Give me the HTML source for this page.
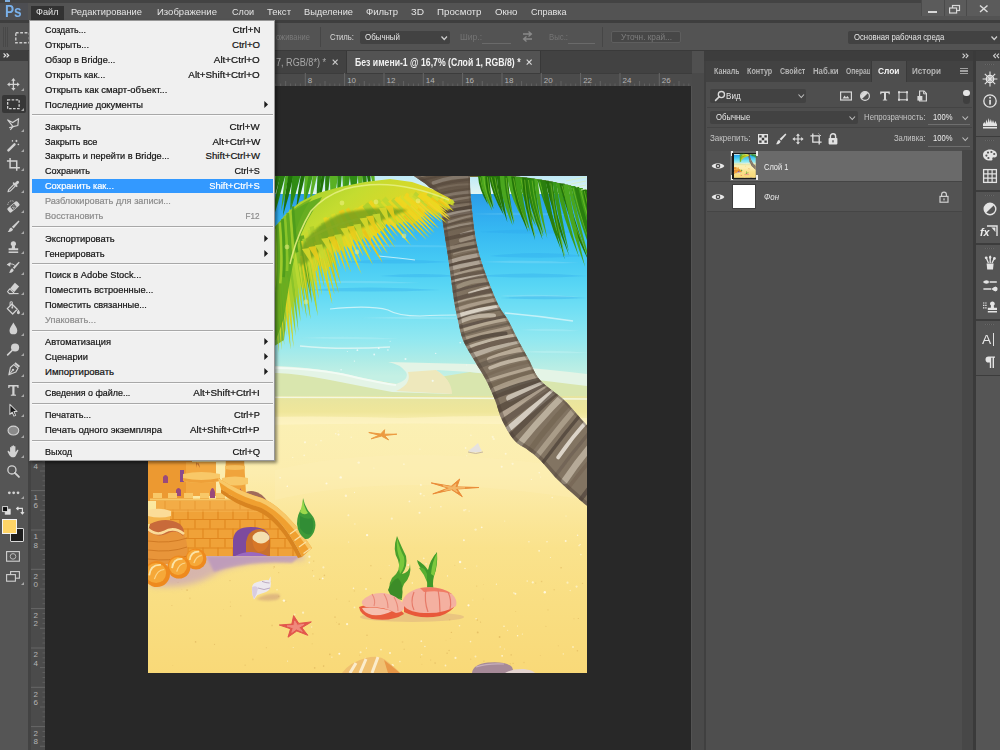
<!DOCTYPE html>
<html><head><meta charset="utf-8"><title>Photoshop</title>
<style>
html,body{margin:0;padding:0;}
body{width:1000px;height:750px;overflow:hidden;position:relative;background:#535353;font-family:"Liberation Sans",sans-serif;}
.t{position:absolute;white-space:nowrap;line-height:1;}
.r{position:absolute;}
svg{position:absolute;overflow:visible;}
</style></head><body>
<!-- sec_base -->
<div class="r" style="left:0px;top:0px;width:1000px;height:20px;background:#535353;"></div>
<div class="r" style="left:0px;top:0px;width:1000px;height:3px;background:#434343;"></div>
<div class="r" style="left:0px;top:20px;width:1000px;height:3px;background:#3e3e3e;"></div>
<div class="r" style="left:0px;top:23px;width:1000px;height:27px;background:#535353;"></div>
<div class="r" style="left:0px;top:50px;width:1000px;height:1px;background:#3a3a3a;"></div>
<div class="r" style="left:30px;top:51px;width:674px;height:22px;background:#424242;"></div>
<div class="r" style="left:30px;top:73px;width:662px;height:13px;background:#4b4b4b;"></div>
<div class="r" style="left:30px;top:86px;width:15px;height:664px;background:#4b4b4b;"></div>
<div class="r" style="left:45px;top:86px;width:646px;height:664px;background:#282828;"></div>
<div class="r" style="left:691px;top:73px;width:13px;height:677px;background:#535353;"></div>
<div class="r" style="left:28px;top:51px;width:2px;height:699px;background:#3a3a3a;"></div>
<!-- sec_canvas -->
<svg style="left:0;top:0" width="0" height="0"><defs><g id="beach"><linearGradient id="gsea" x1="0" y1="194" x2="0" y2="376" gradientUnits="userSpaceOnUse">
<stop offset="0" stop-color="#2c9ce6"/><stop offset="0.08" stop-color="#2fa8ee"/><stop offset="0.2" stop-color="#36b8f2"/><stop offset="0.35" stop-color="#44c8f4"/><stop offset="0.5" stop-color="#58d6f4"/><stop offset="0.65" stop-color="#74e0f4"/><stop offset="0.8" stop-color="#92e8f0"/><stop offset="0.92" stop-color="#b0ece6"/><stop offset="1" stop-color="#c4f0e4"/></linearGradient>
<linearGradient id="gsand" x1="0" y1="395" x2="0" y2="673" gradientUnits="userSpaceOnUse">
<stop offset="0" stop-color="#e6e4a0"/><stop offset="0.06" stop-color="#efe69a"/><stop offset="0.1" stop-color="#fbf0b4"/><stop offset="0.28" stop-color="#fcedae"/><stop offset="0.42" stop-color="#fbe79c"/><stop offset="0.55" stop-color="#fae28c"/><stop offset="0.75" stop-color="#f9de82"/><stop offset="1" stop-color="#f9d978"/></linearGradient>
<linearGradient id="gsky" x1="0" y1="176" x2="0" y2="194" gradientUnits="userSpaceOnUse"><stop offset="0" stop-color="#bfe9f6"/><stop offset="1" stop-color="#e2f6f4"/></linearGradient>
<rect x="148" y="176" width="439" height="497" fill="#fbe9a4"/>
<rect x="148" y="176" width="439" height="19" fill="url(#gsky)"/>
<rect x="148" y="194" width="439" height="190" fill="url(#gsea)"/>
<path d="M300 212 Q360.0 209 420 213 Q360.0 214 300 212 Z" fill="#5cc4f4" opacity="0.5"/>
<path d="M470 214 Q525.0 211 580 215 Q525.0 216 470 214 Z" fill="#58c0f2" opacity="0.5"/>
<path d="M330 246 Q405.0 243 480 247 Q405.0 248 330 246 Z" fill="#6ad2f6" opacity="0.45"/>
<path d="M480 262 Q530.0 259 580 263 Q530.0 264 480 262 Z" fill="#78d8f6" opacity="0.5"/>
<path d="M300 282 Q360.0 279 420 283 Q360.0 284 300 282 Z" fill="#8ae0f6" opacity="0.45"/>
<path d="M500 296 Q540.0 293 580 297 Q540.0 298 500 296 Z" fill="#90e2f6" opacity="0.5"/>
<path d="M360 318 Q430.0 315 500 319 Q430.0 320 360 318 Z" fill="#a4eaf6" opacity="0.5"/>
<path d="M520 330 Q550.0 327 580 331 Q550.0 332 520 330 Z" fill="#a8ecf6" opacity="0.5"/>
<path d="M300 338 Q350.0 335 400 339 Q350.0 340 300 338 Z" fill="#b0eef4" opacity="0.5"/>
<path d="M520 352 Q555.0 349 590 353 Q555.0 354 520 352 Z" fill="#c0f2f2" opacity="0.5"/>
<path d="M340 262 Q395.0 257 450 262 Q395.0 265.0 340 262 Z" fill="#2aa4ec" opacity="0.32"/>
<path d="M380 276 Q420.0 272 460 276 Q420.0 278.4 380 276 Z" fill="#2aa4ec" opacity="0.32"/>
<path d="M300 290 Q370.0 285 440 290 Q370.0 293.0 300 290 Z" fill="#2aa4ec" opacity="0.32"/>
<path d="M480 232 Q533.5 227 587 232 Q533.5 235.0 480 232 Z" fill="#2aa4ec" opacity="0.32"/>
<path d="M490 256 Q538.5 250 587 256 Q538.5 259.6 490 256 Z" fill="#2aa4ec" opacity="0.32"/>
<path d="M478 276 Q532.5 271 587 276 Q532.5 279.0 478 276 Z" fill="#2aa4ec" opacity="0.32"/>
<path d="M300 226 Q375.0 222 450 226 Q375.0 228.4 300 226 Z" fill="#2aa4ec" opacity="0.32"/>
<path d="M500 298 Q543.5 294 587 298 Q543.5 300.4 500 298 Z" fill="#2aa4ec" opacity="0.32"/>
<path d="M378 256 Q400 258 415 260" stroke="#d8f4fa" stroke-width="1.2" fill="none" opacity="0.8"/>
<path d="M330 309 Q370 305 388 310 Q398 316 420 316 Q440 315 456 315" stroke="#e4f8fa" stroke-width="1.2" fill="none" opacity="0.75"/>
<path d="M505 313 Q540 316 573 321" stroke="#e4f8fa" stroke-width="1.4" fill="none" opacity="0.7"/>
<path d="M300 346 Q340 350 390 347" stroke="#e8f8f6" stroke-width="1.4" fill="none" opacity="0.75"/>
<path d="M148 372 L277 370 Q330 372 396 384 L470 372 L587 384 L587 400 L148 400 Z" fill="#d9e6ae"/>
<path d="M148 366 L277 366 Q320 368 350 375 Q380 382 396 384 Q410 380 406 372 Q400 364 388 362 L470 364 Q520 366 587 374 L587 386 Q540 380 470 372 L436 370 Q452 380 450 394 L392 392 Q360 386 330 380 Q300 374 277 373 L148 373 Z" fill="#e4f4e6"/>
<path d="M436 370 Q452 380 452 394 L396 391 Q412 384 408 372 Z" fill="#eee8bc"/>
<path d="M148 368 L277 368 Q320 369 350 376 Q380 383 396 385" stroke="#f2fbf4" stroke-width="2" fill="none"/>
<rect x="148" y="396" width="439" height="277" fill="url(#gsand)"/>
<path d="M148 397 L360 397.5 L587 399" stroke="#f4f8e0" stroke-width="1.3" fill="none"/>
<path d="M148 420 Q300 414 400 418 Q500 414 587 418 L587 426 Q400 420 148 428 Z" fill="#fdf4c4" opacity="0.7"/>
<path d="M275 470 Q400 440 587 470 L587 500 Q400 470 275 500 Z" fill="#fdf2c0" opacity="0.22"/>
<circle cx="468.5" cy="605.3" r="1.1" fill="#fffbe8" opacity="0.88"/>
<circle cx="504.6" cy="649.1" r="0.5" fill="#fffbe8" opacity="0.69"/>
<circle cx="567.5" cy="582.7" r="1.1" fill="#fffbe8" opacity="0.55"/>
<circle cx="420.9" cy="484.9" r="0.9" fill="#fffbe8" opacity="0.73"/>
<circle cx="280.1" cy="477.7" r="0.7" fill="#fffbe8" opacity="0.87"/>
<circle cx="512.6" cy="463.8" r="1.1" fill="#fffbe8" opacity="0.56"/>
<circle cx="466.8" cy="455.8" r="0.5" fill="#fffbe8" opacity="0.85"/>
<circle cx="340.7" cy="477.4" r="1.2" fill="#fffbe8" opacity="0.85"/>
<circle cx="365.4" cy="658.6" r="0.9" fill="#fffbe8" opacity="0.77"/>
<circle cx="339.3" cy="653.7" r="1.0" fill="#fffbe8" opacity="0.89"/>
<circle cx="552.2" cy="497.6" r="0.8" fill="#fffbe8" opacity="0.57"/>
<circle cx="321.0" cy="440.8" r="0.7" fill="#fffbe8" opacity="0.74"/>
<circle cx="277.0" cy="589.7" r="0.7" fill="#fffbe8" opacity="0.62"/>
<circle cx="528.9" cy="541.8" r="0.7" fill="#fffbe8" opacity="0.69"/>
<circle cx="493.7" cy="438.9" r="1.2" fill="#fffbe8" opacity="0.51"/>
<circle cx="507.7" cy="630.3" r="0.5" fill="#fffbe8" opacity="0.82"/>
<circle cx="389.2" cy="565.6" r="0.5" fill="#fffbe8" opacity="0.52"/>
<circle cx="331.9" cy="657.1" r="0.6" fill="#fffbe8" opacity="0.80"/>
<circle cx="563.3" cy="653.9" r="0.7" fill="#fffbe8" opacity="0.64"/>
<circle cx="438.1" cy="613.5" r="0.6" fill="#fffbe8" opacity="0.80"/>
<circle cx="522.3" cy="633.9" r="0.5" fill="#fffbe8" opacity="0.88"/>
<circle cx="304.2" cy="507.8" r="0.9" fill="#fffbe8" opacity="0.87"/>
<circle cx="381.0" cy="649.6" r="0.9" fill="#fffbe8" opacity="0.62"/>
<circle cx="373.9" cy="468.1" r="0.6" fill="#fffbe8" opacity="0.56"/>
<circle cx="489.0" cy="667.2" r="0.6" fill="#fffbe8" opacity="0.52"/>
<circle cx="580.9" cy="554.6" r="0.8" fill="#fffbe8" opacity="0.59"/>
<circle cx="459.5" cy="625.8" r="0.8" fill="#fffbe8" opacity="0.67"/>
<circle cx="293.2" cy="647.6" r="0.5" fill="#fffbe8" opacity="0.70"/>
<circle cx="502.1" cy="655.8" r="0.9" fill="#fffbe8" opacity="0.82"/>
<circle cx="308.9" cy="530.6" r="0.6" fill="#fffbe8" opacity="0.84"/>
<circle cx="367.1" cy="535.1" r="1.2" fill="#fffbe8" opacity="0.84"/>
<circle cx="577.6" cy="535.2" r="0.8" fill="#fffbe8" opacity="0.79"/>
<circle cx="424.0" cy="495.7" r="0.8" fill="#fffbe8" opacity="0.56"/>
<circle cx="392.5" cy="665.2" r="1.2" fill="#fffbe8" opacity="0.75"/>
<circle cx="430.3" cy="507.3" r="0.6" fill="#fffbe8" opacity="0.61"/>
<circle cx="517.6" cy="635.8" r="0.8" fill="#fffbe8" opacity="0.81"/>
<circle cx="515.4" cy="593.8" r="1.0" fill="#fffbe8" opacity="0.80"/>
<circle cx="388.3" cy="596.2" r="0.7" fill="#fffbe8" opacity="0.69"/>
<circle cx="513.9" cy="592.9" r="0.7" fill="#fffbe8" opacity="0.88"/>
<circle cx="476.8" cy="566.1" r="0.5" fill="#fffbe8" opacity="0.72"/>
<circle cx="353.5" cy="588.2" r="0.8" fill="#fffbe8" opacity="0.83"/>
<circle cx="476.1" cy="618.8" r="0.7" fill="#fffbe8" opacity="0.76"/>
<circle cx="504.0" cy="626.2" r="0.7" fill="#fffbe8" opacity="0.84"/>
<circle cx="544.8" cy="592.3" r="1.2" fill="#fffbe8" opacity="0.88"/>
<circle cx="436.1" cy="553.6" r="0.6" fill="#fffbe8" opacity="0.83"/>
<circle cx="565.7" cy="541.0" r="1.0" fill="#fffbe8" opacity="0.79"/>
<circle cx="501.7" cy="466.8" r="1.0" fill="#fffbe8" opacity="0.73"/>
<circle cx="481.7" cy="527.3" r="0.9" fill="#fffbe8" opacity="0.81"/>
<circle cx="472.8" cy="600.1" r="0.5" fill="#fffbe8" opacity="0.56"/>
<circle cx="412.3" cy="583.0" r="0.7" fill="#fffbe8" opacity="0.77"/>
<circle cx="470.9" cy="435.2" r="0.8" fill="#fffbe8" opacity="0.59"/>
<circle cx="292.7" cy="457.4" r="0.7" fill="#fffbe8" opacity="0.57"/>
<circle cx="335.7" cy="433.7" r="0.8" fill="#fffbe8" opacity="0.65"/>
<circle cx="465.0" cy="568.4" r="0.7" fill="#fffbe8" opacity="0.86"/>
<circle cx="276.2" cy="523.5" r="0.7" fill="#fffbe8" opacity="0.66"/>
<circle cx="311.6" cy="627.0" r="0.8" fill="#fffbe8" opacity="0.51"/>
<circle cx="465.6" cy="448.0" r="0.9" fill="#fffbe8" opacity="0.64"/>
<circle cx="455.5" cy="657.9" r="1.1" fill="#fffbe8" opacity="0.67"/>
<circle cx="527.2" cy="581.1" r="0.8" fill="#fffbe8" opacity="0.56"/>
<circle cx="460.1" cy="562.0" r="1.2" fill="#fffbe8" opacity="0.89"/>
<circle cx="464.1" cy="510.3" r="1.1" fill="#fffbe8" opacity="0.50"/>
<circle cx="309.3" cy="562.5" r="0.9" fill="#fffbe8" opacity="0.56"/>
<circle cx="470.5" cy="641.6" r="0.8" fill="#fffbe8" opacity="0.67"/>
<circle cx="345.9" cy="495.8" r="1.2" fill="#fffbe8" opacity="0.65"/>
<circle cx="573.0" cy="647.0" r="0.9" fill="#fffbe8" opacity="0.60"/>
<circle cx="579.1" cy="545.6" r="0.8" fill="#fffbe8" opacity="0.63"/>
<circle cx="580.1" cy="544.5" r="0.7" fill="#fffbe8" opacity="0.69"/>
<circle cx="313.7" cy="576.1" r="0.8" fill="#fffbe8" opacity="0.62"/>
<circle cx="517.5" cy="625.9" r="0.5" fill="#fffbe8" opacity="0.71"/>
<circle cx="360.6" cy="652.3" r="1.0" fill="#fffbe8" opacity="0.60"/>
<circle cx="358.7" cy="462.6" r="1.2" fill="#fffbe8" opacity="0.62"/>
<circle cx="463.9" cy="540.3" r="1.0" fill="#fffbe8" opacity="0.74"/>
<circle cx="505.7" cy="453.7" r="1.0" fill="#fffbe8" opacity="0.62"/>
<circle cx="440.9" cy="506.7" r="0.7" fill="#fffbe8" opacity="0.71"/>
<circle cx="419.5" cy="512.7" r="1.0" fill="#fffbe8" opacity="0.74"/>
<circle cx="287.3" cy="486.3" r="0.8" fill="#fffbe8" opacity="0.87"/>
<circle cx="550.4" cy="557.6" r="0.5" fill="#fffbe8" opacity="0.81"/>
<circle cx="408.2" cy="564.9" r="1.0" fill="#fffbe8" opacity="0.75"/>
<circle cx="424.9" cy="646.5" r="0.8" fill="#fffbe8" opacity="0.66"/>
<circle cx="539.2" cy="472.7" r="0.7" fill="#fffbe8" opacity="0.83"/>
<circle cx="296.4" cy="628.2" r="1.0" fill="#fffbe8" opacity="0.67"/>
<circle cx="364.5" cy="614.7" r="1.1" fill="#fffbe8" opacity="0.56"/>
<circle cx="423.8" cy="558.4" r="0.8" fill="#fffbe8" opacity="0.63"/>
<circle cx="323.4" cy="567.4" r="1.1" fill="#fffbe8" opacity="0.53"/>
<circle cx="347.1" cy="624.2" r="1.1" fill="#fffbe8" opacity="0.77"/>
<circle cx="283.9" cy="600.6" r="1.2" fill="#fffbe8" opacity="0.90"/>
<circle cx="492.7" cy="436.9" r="1.1" fill="#fffbe8" opacity="0.59"/>
<circle cx="475.5" cy="656.4" r="1.0" fill="#fffbe8" opacity="0.55"/>
<circle cx="366.4" cy="648.1" r="0.6" fill="#fffbe8" opacity="0.74"/>
<circle cx="403.9" cy="464.2" r="0.9" fill="#fffbe8" opacity="0.52"/>
<circle cx="309.4" cy="517.1" r="0.6" fill="#fffbe8" opacity="0.52"/>
<circle cx="453.8" cy="605.4" r="1.1" fill="#fffbe8" opacity="0.55"/>
<circle cx="409.4" cy="501.4" r="0.9" fill="#fffbe8" opacity="0.70"/>
<circle cx="566.0" cy="515.9" r="0.5" fill="#fffbe8" opacity="0.78"/>
<circle cx="322.7" cy="578.4" r="0.9" fill="#fffbe8" opacity="0.86"/>
<circle cx="447.5" cy="575.9" r="0.7" fill="#fffbe8" opacity="0.72"/>
<circle cx="354.5" cy="607.4" r="0.9" fill="#fffbe8" opacity="0.55"/>
<circle cx="348.4" cy="515.2" r="1.0" fill="#fffbe8" opacity="0.57"/>
<circle cx="496.4" cy="584.2" r="0.6" fill="#fffbe8" opacity="0.77"/>
<circle cx="304.2" cy="455.3" r="0.9" fill="#fffbe8" opacity="0.60"/>
<circle cx="547.0" cy="541.8" r="0.7" fill="#fffbe8" opacity="0.82"/>
<circle cx="285.1" cy="601.2" r="0.5" fill="#fffbe8" opacity="0.56"/>
<circle cx="570.2" cy="590.5" r="0.7" fill="#fffbe8" opacity="0.55"/>
<circle cx="576.6" cy="586.6" r="1.1" fill="#fffbe8" opacity="0.56"/>
<circle cx="469.1" cy="511.1" r="0.7" fill="#fffbe8" opacity="0.63"/>
<circle cx="465.7" cy="509.7" r="0.8" fill="#fffbe8" opacity="0.55"/>
<circle cx="532.8" cy="582.4" r="1.1" fill="#fffbe8" opacity="0.67"/>
<circle cx="539.1" cy="550.8" r="0.9" fill="#fffbe8" opacity="0.73"/>
<circle cx="504.7" cy="521.1" r="0.6" fill="#fffbe8" opacity="0.51"/>
<circle cx="338.5" cy="434.6" r="1.1" fill="#fffbe8" opacity="0.69"/>
<circle cx="421.3" cy="641.2" r="0.9" fill="#fffbe8" opacity="0.67"/>
<circle cx="419.9" cy="449.2" r="0.6" fill="#fffbe8" opacity="0.56"/>
<circle cx="391.8" cy="518.7" r="1.1" fill="#fffbe8" opacity="0.56"/>
<circle cx="354.5" cy="492.4" r="0.6" fill="#fffbe8" opacity="0.61"/>
<circle cx="348.7" cy="542.1" r="0.5" fill="#fffbe8" opacity="0.87"/>
<circle cx="390.0" cy="652.9" r="1.0" fill="#fffbe8" opacity="0.77"/>
<circle cx="421.8" cy="654.7" r="0.6" fill="#fffbe8" opacity="0.77"/>
<circle cx="366.0" cy="588.9" r="1.0" fill="#fffbe8" opacity="0.57"/>
<circle cx="338.1" cy="431.1" r="0.7" fill="#fffbe8" opacity="0.53"/>
<circle cx="399.9" cy="661.6" r="0.8" fill="#fffbe8" opacity="0.62"/>
<circle cx="420.6" cy="493.8" r="1.0" fill="#fffbe8" opacity="0.79"/>
<circle cx="326.5" cy="483.4" r="1.0" fill="#fffbe8" opacity="0.88"/>
<circle cx="475.6" cy="529.6" r="1.2" fill="#fffbe8" opacity="0.50"/>
<circle cx="294.8" cy="614.4" r="0.8" fill="#fffbe8" opacity="0.52"/>
<circle cx="445.5" cy="665.5" r="0.9" fill="#fffbe8" opacity="0.64"/>
<circle cx="305.0" cy="442.3" r="1.1" fill="#fffbe8" opacity="0.70"/>
<circle cx="351.2" cy="437.3" r="0.8" fill="#fffbe8" opacity="0.52"/>
<circle cx="354.9" cy="524.0" r="0.7" fill="#fffbe8" opacity="0.52"/>
<circle cx="287.6" cy="661.1" r="0.6" fill="#fffbe8" opacity="0.70"/>
<circle cx="400.3" cy="554.1" r="0.6" fill="#fffbe8" opacity="0.63"/>
<circle cx="309.4" cy="556.7" r="1.1" fill="#fffbe8" opacity="0.74"/>
<circle cx="540.7" cy="477.1" r="0.5" fill="#fffbe8" opacity="0.72"/>
<circle cx="426.3" cy="563.9" r="0.8" fill="#fffbe8" opacity="0.75"/>
<circle cx="500.2" cy="646.9" r="0.7" fill="#fffbe8" opacity="0.68"/>
<circle cx="531.4" cy="479.4" r="0.6" fill="#fffbe8" opacity="0.62"/>
<circle cx="303.1" cy="612.7" r="1.1" fill="#fffbe8" opacity="0.63"/>
<circle cx="316.1" cy="444.9" r="0.7" fill="#fffbe8" opacity="0.53"/>
<circle cx="336.5" cy="622.3" r="0.5" fill="#e0b860" opacity="0.42"/>
<circle cx="454.8" cy="565.2" r="0.5" fill="#e0b860" opacity="0.51"/>
<circle cx="312.6" cy="570.6" r="0.6" fill="#e0b860" opacity="0.53"/>
<circle cx="477.3" cy="620.1" r="0.8" fill="#e0b860" opacity="0.66"/>
<circle cx="480.5" cy="622.1" r="0.6" fill="#e0b860" opacity="0.73"/>
<circle cx="435.1" cy="663.1" r="0.8" fill="#e0b860" opacity="0.68"/>
<circle cx="266.4" cy="647.7" r="0.6" fill="#e0b860" opacity="0.45"/>
<circle cx="178.7" cy="578.3" r="0.5" fill="#e0b860" opacity="0.67"/>
<circle cx="274.2" cy="566.9" r="0.8" fill="#e0b860" opacity="0.62"/>
<circle cx="162.0" cy="565.5" r="0.5" fill="#e0b860" opacity="0.54"/>
<circle cx="524.0" cy="662.5" r="0.7" fill="#e0b860" opacity="0.49"/>
<circle cx="336.6" cy="599.1" r="0.6" fill="#e0b860" opacity="0.40"/>
<circle cx="404.2" cy="649.3" r="0.8" fill="#e0b860" opacity="0.44"/>
<circle cx="380.7" cy="578.5" r="0.8" fill="#e0b860" opacity="0.58"/>
<circle cx="558.3" cy="645.8" r="0.5" fill="#e0b860" opacity="0.53"/>
<circle cx="548.0" cy="609.8" r="0.6" fill="#e0b860" opacity="0.58"/>
<circle cx="483.9" cy="661.1" r="0.7" fill="#e0b860" opacity="0.79"/>
<circle cx="409.3" cy="571.2" r="0.8" fill="#e0b860" opacity="0.57"/>
<circle cx="172.8" cy="665.6" r="0.4" fill="#e0b860" opacity="0.63"/>
<circle cx="359.7" cy="655.2" r="0.6" fill="#e0b860" opacity="0.49"/>
<circle cx="270.5" cy="581.7" r="0.7" fill="#e0b860" opacity="0.54"/>
<circle cx="476.7" cy="586.1" r="0.6" fill="#e0b860" opacity="0.50"/>
<circle cx="577.4" cy="650.7" r="0.8" fill="#e0b860" opacity="0.65"/>
<circle cx="324.4" cy="575.4" r="0.8" fill="#e0b860" opacity="0.60"/>
<circle cx="166.4" cy="578.3" r="0.4" fill="#e0b860" opacity="0.69"/>
<circle cx="541.6" cy="581.5" r="0.8" fill="#e0b860" opacity="0.53"/>
<circle cx="447.1" cy="653.2" r="0.7" fill="#e0b860" opacity="0.72"/>
<circle cx="313.7" cy="561.1" r="0.7" fill="#e0b860" opacity="0.63"/>
<circle cx="230.4" cy="602.0" r="0.6" fill="#e0b860" opacity="0.41"/>
<circle cx="285.8" cy="601.3" r="0.6" fill="#e0b860" opacity="0.68"/>
<circle cx="323.6" cy="666.1" r="0.8" fill="#e0b860" opacity="0.77"/>
<circle cx="451.4" cy="632.4" r="0.7" fill="#e0b860" opacity="0.72"/>
<circle cx="307.8" cy="624.1" r="0.7" fill="#e0b860" opacity="0.61"/>
<circle cx="273.6" cy="568.4" r="0.4" fill="#e0b860" opacity="0.54"/>
<circle cx="402.5" cy="642.0" r="0.8" fill="#e0b860" opacity="0.52"/>
<circle cx="554.2" cy="589.7" r="0.8" fill="#e0b860" opacity="0.43"/>
<circle cx="477.7" cy="632.4" r="0.9" fill="#e0b860" opacity="0.76"/>
<circle cx="449.1" cy="650.5" r="0.8" fill="#e0b860" opacity="0.64"/>
<circle cx="240.8" cy="615.8" r="0.8" fill="#e0b860" opacity="0.50"/>
<circle cx="574.0" cy="618.7" r="0.6" fill="#e0b860" opacity="0.40"/>
<circle cx="319.7" cy="579.2" r="0.7" fill="#e0b860" opacity="0.76"/>
<circle cx="545.9" cy="626.3" r="0.6" fill="#e0b860" opacity="0.44"/>
<circle cx="449.6" cy="619.8" r="0.8" fill="#e0b860" opacity="0.55"/>
<circle cx="535.7" cy="583.0" r="0.6" fill="#e0b860" opacity="0.51"/>
<circle cx="420.6" cy="656.9" r="0.5" fill="#e0b860" opacity="0.65"/>
<circle cx="483.4" cy="584.3" r="0.4" fill="#e0b860" opacity="0.63"/>
<circle cx="511.2" cy="654.9" r="0.8" fill="#e0b860" opacity="0.57"/>
<circle cx="335.0" cy="617.1" r="0.9" fill="#e0b860" opacity="0.52"/>
<circle cx="272.1" cy="625.4" r="0.9" fill="#e0b860" opacity="0.47"/>
<circle cx="163.3" cy="572.5" r="0.7" fill="#e0b860" opacity="0.64"/>
<circle cx="230.0" cy="580.6" r="0.7" fill="#e0b860" opacity="0.66"/>
<circle cx="450.2" cy="638.7" r="0.4" fill="#e0b860" opacity="0.59"/>
<circle cx="513.1" cy="663.4" r="0.6" fill="#e0b860" opacity="0.74"/>
<circle cx="430.7" cy="660.1" r="0.5" fill="#e0b860" opacity="0.68"/>
<circle cx="515.7" cy="611.5" r="0.5" fill="#e0b860" opacity="0.48"/>
<circle cx="218.1" cy="570.0" r="0.5" fill="#e0b860" opacity="0.65"/>
<circle cx="195.6" cy="641.9" r="0.8" fill="#e0b860" opacity="0.73"/>
<circle cx="499.6" cy="637.0" r="0.9" fill="#e0b860" opacity="0.78"/>
<circle cx="421.9" cy="664.2" r="0.5" fill="#e0b860" opacity="0.44"/>
<circle cx="178.0" cy="582.3" r="0.6" fill="#e0b860" opacity="0.58"/>
<circle cx="446.0" cy="640.2" r="0.4" fill="#e0b860" opacity="0.56"/>
<circle cx="386.4" cy="600.5" r="0.5" fill="#e0b860" opacity="0.64"/>
<circle cx="312.9" cy="633.8" r="0.6" fill="#e0b860" opacity="0.79"/>
<circle cx="561.1" cy="567.8" r="0.8" fill="#e0b860" opacity="0.69"/>
<circle cx="278.7" cy="572.6" r="0.6" fill="#e0b860" opacity="0.54"/>
<circle cx="470.7" cy="659.2" r="0.6" fill="#e0b860" opacity="0.52"/>
<circle cx="367.0" cy="635.3" r="0.8" fill="#e0b860" opacity="0.63"/>
<circle cx="278.7" cy="596.4" r="0.8" fill="#e0b860" opacity="0.61"/>
<circle cx="171.9" cy="605.4" r="0.5" fill="#e0b860" opacity="0.67"/>
<circle cx="181.9" cy="589.3" r="0.4" fill="#e0b860" opacity="0.59"/>
<circle cx="578.3" cy="618.5" r="0.6" fill="#e0b860" opacity="0.77"/>
<circle cx="189.9" cy="598.4" r="0.8" fill="#e0b860" opacity="0.40"/>
<circle cx="483.2" cy="599.0" r="0.4" fill="#e0b860" opacity="0.50"/>
<circle cx="349.3" cy="601.3" r="0.7" fill="#e0b860" opacity="0.42"/>
<circle cx="245.1" cy="665.2" r="0.6" fill="#e0b860" opacity="0.59"/>
<circle cx="187.1" cy="590.1" r="0.9" fill="#e0b860" opacity="0.67"/>
<circle cx="370.9" cy="565.7" r="0.6" fill="#e0b860" opacity="0.71"/>
<circle cx="339.1" cy="624.1" r="0.9" fill="#e0b860" opacity="0.66"/>
<circle cx="426.6" cy="563.9" r="0.4" fill="#e0b860" opacity="0.71"/>
<circle cx="329.8" cy="654.4" r="0.8" fill="#e0b860" opacity="0.77"/>
<circle cx="314.7" cy="667.9" r="0.8" fill="#e0b860" opacity="0.76"/>
<circle cx="214.5" cy="644.3" r="0.6" fill="#e0b860" opacity="0.79"/>
<circle cx="582.5" cy="583.4" r="0.6" fill="#e0b860" opacity="0.51"/>
<circle cx="354.4" cy="590.9" r="0.7" fill="#e0b860" opacity="0.45"/>
<circle cx="223.6" cy="609.4" r="0.4" fill="#e0b860" opacity="0.55"/>
<circle cx="540.4" cy="655.6" r="0.5" fill="#e0b860" opacity="0.41"/>
<circle cx="510.3" cy="663.8" r="0.7" fill="#e0b860" opacity="0.45"/>
<circle cx="252.9" cy="659.4" r="0.9" fill="#e0b860" opacity="0.41"/>
<circle cx="230.4" cy="606.3" r="0.5" fill="#e0b860" opacity="0.70"/>
<circle cx="312.2" cy="643.7" r="0.5" fill="#e0b860" opacity="0.61"/>
<circle cx="466.7" cy="365.0" r="0.6" fill="#f4fcfc" opacity="0.8"/>
<circle cx="354.4" cy="361.1" r="0.7" fill="#f4fcfc" opacity="0.8"/>
<circle cx="387.9" cy="350.0" r="0.8" fill="#f4fcfc" opacity="0.8"/>
<circle cx="465.6" cy="334.1" r="0.8" fill="#f4fcfc" opacity="0.8"/>
<circle cx="374.2" cy="354.5" r="0.9" fill="#f4fcfc" opacity="0.8"/>
<circle cx="357.4" cy="350.2" r="0.9" fill="#f4fcfc" opacity="0.8"/>
<circle cx="341.1" cy="369.7" r="0.8" fill="#f4fcfc" opacity="0.8"/>
<circle cx="405.5" cy="358.9" r="1.0" fill="#f4fcfc" opacity="0.8"/>
<circle cx="347.3" cy="351.5" r="0.5" fill="#f4fcfc" opacity="0.8"/>
<circle cx="390.1" cy="341.2" r="0.5" fill="#f4fcfc" opacity="0.8"/>
<circle cx="378.7" cy="348.2" r="0.9" fill="#f4fcfc" opacity="0.8"/>
<circle cx="460.2" cy="342.8" r="0.8" fill="#f4fcfc" opacity="0.8"/>
<circle cx="432.7" cy="380.8" r="1.1" fill="#f4fcfc" opacity="0.8"/>
<circle cx="468.4" cy="338.2" r="0.6" fill="#f4fcfc" opacity="0.8"/>
<circle cx="461.1" cy="323.2" r="0.8" fill="#f4fcfc" opacity="0.8"/>
<circle cx="435.7" cy="353.4" r="0.7" fill="#f4fcfc" opacity="0.8"/><filter id="blur3" x="-20%" y="-50%" width="140%" height="200%"><feGaussianBlur stdDeviation="3"/></filter>
<filter id="blur1" x="-20%" y="-50%" width="140%" height="200%"><feGaussianBlur stdDeviation="1.2"/></filter>
<path d="M150 586 Q190 590 215 574 Q240 560 306 560 L300 552 L200 552 L150 570 Z" fill="#c09ac4" opacity="0.6" filter="url(#blur3)"/>
<path d="M206 556 H300 L292 563 Q250 560 214 572 Z" fill="#b08cc4" opacity="0.6" filter="url(#blur1)"/>
<rect x="148" y="455" width="44" height="46" fill="#f0a238"/>
<rect x="148" y="455" width="44" height="46" fill="#e8902a" opacity="0.5"/>
<path d="M163 483 V477 Q165.5 473 168 477 V483 Z" fill="#9a4a7a"/>
<path d="M176 496 V490 Q178.5 486 181 490 V496 Z" fill="#9a4a7a"/>
<rect x="180" y="470" width="4" height="12" fill="#8a4a8c"/>
<path d="M186 462 H216 V496 H186 Z" fill="#f2a840"/>
<path d="M183 474 Q201 470 220 474 V481 Q201 485 183 481 Z" fill="#f8c868"/>
<path d="M183 478 Q201 482 220 478 V481 Q201 485 183 481 Z" fill="#eea038"/>
<path d="M210 486 V492 Q212.5 484 215 492 V498 H210 Z" fill="#9a4a7a"/>
<path d="M196 462 V468 Q198 458 200 468 Z" fill="#c07030"/>
<path d="M226 458 H244 L246 494 H224 Z" fill="#f0a43c"/>
<path d="M222 478 Q235 475 248 478 V484 Q235 487 222 484 Z" fill="#f8c868"/>
<path d="M225 466 Q235 464 245 466 V469 Q235 471 225 469 Z" fill="#f6be5c"/>
<path d="M240 488 V494 Q241.5 486 243 494 Z" fill="#a0527a"/>
<path d="M246 492 Q258 488 268 502 L250 500 Z" fill="#a06a5a"/>
<path d="M156 499 H262 L300 556 H156 Z" fill="#f0a238"/>
<clipPath id="cwall"><path d="M156 499 H262 L300 556 H156 Z"/></clipPath>
<g clip-path="url(#cwall)"><path d="M150 500.5 H305" stroke="#e0861e" stroke-width="1.1"/><path d="M150 500 V509.5" stroke="#e0861e" stroke-width="1.1"/><path d="M165 500 V509.5" stroke="#e0861e" stroke-width="1.1"/><path d="M180 500 V509.5" stroke="#e0861e" stroke-width="1.1"/><path d="M195 500 V509.5" stroke="#e0861e" stroke-width="1.1"/><path d="M210 500 V509.5" stroke="#e0861e" stroke-width="1.1"/><path d="M225 500 V509.5" stroke="#e0861e" stroke-width="1.1"/><path d="M240 500 V509.5" stroke="#e0861e" stroke-width="1.1"/><path d="M255 500 V509.5" stroke="#e0861e" stroke-width="1.1"/><path d="M270 500 V509.5" stroke="#e0861e" stroke-width="1.1"/><path d="M285 500 V509.5" stroke="#e0861e" stroke-width="1.1"/><path d="M300 500 V509.5" stroke="#e0861e" stroke-width="1.1"/><path d="M150 510.0 H305" stroke="#e0861e" stroke-width="1.1"/><path d="M158 509.5 V519" stroke="#e0861e" stroke-width="1.1"/><path d="M173 509.5 V519" stroke="#e0861e" stroke-width="1.1"/><path d="M188 509.5 V519" stroke="#e0861e" stroke-width="1.1"/><path d="M203 509.5 V519" stroke="#e0861e" stroke-width="1.1"/><path d="M218 509.5 V519" stroke="#e0861e" stroke-width="1.1"/><path d="M233 509.5 V519" stroke="#e0861e" stroke-width="1.1"/><path d="M248 509.5 V519" stroke="#e0861e" stroke-width="1.1"/><path d="M263 509.5 V519" stroke="#e0861e" stroke-width="1.1"/><path d="M278 509.5 V519" stroke="#e0861e" stroke-width="1.1"/><path d="M293 509.5 V519" stroke="#e0861e" stroke-width="1.1"/><path d="M150 519.5 H305" stroke="#e0861e" stroke-width="1.1"/><path d="M150 519 V528.5" stroke="#e0861e" stroke-width="1.1"/><path d="M165 519 V528.5" stroke="#e0861e" stroke-width="1.1"/><path d="M180 519 V528.5" stroke="#e0861e" stroke-width="1.1"/><path d="M195 519 V528.5" stroke="#e0861e" stroke-width="1.1"/><path d="M210 519 V528.5" stroke="#e0861e" stroke-width="1.1"/><path d="M225 519 V528.5" stroke="#e0861e" stroke-width="1.1"/><path d="M240 519 V528.5" stroke="#e0861e" stroke-width="1.1"/><path d="M255 519 V528.5" stroke="#e0861e" stroke-width="1.1"/><path d="M270 519 V528.5" stroke="#e0861e" stroke-width="1.1"/><path d="M285 519 V528.5" stroke="#e0861e" stroke-width="1.1"/><path d="M300 519 V528.5" stroke="#e0861e" stroke-width="1.1"/><path d="M150 529.0 H305" stroke="#e0861e" stroke-width="1.1"/><path d="M158 528.5 V538" stroke="#e0861e" stroke-width="1.1"/><path d="M173 528.5 V538" stroke="#e0861e" stroke-width="1.1"/><path d="M188 528.5 V538" stroke="#e0861e" stroke-width="1.1"/><path d="M203 528.5 V538" stroke="#e0861e" stroke-width="1.1"/><path d="M218 528.5 V538" stroke="#e0861e" stroke-width="1.1"/><path d="M233 528.5 V538" stroke="#e0861e" stroke-width="1.1"/><path d="M248 528.5 V538" stroke="#e0861e" stroke-width="1.1"/><path d="M263 528.5 V538" stroke="#e0861e" stroke-width="1.1"/><path d="M278 528.5 V538" stroke="#e0861e" stroke-width="1.1"/><path d="M293 528.5 V538" stroke="#e0861e" stroke-width="1.1"/><path d="M150 538.5 H305" stroke="#e0861e" stroke-width="1.1"/><path d="M150 538 V547.5" stroke="#e0861e" stroke-width="1.1"/><path d="M165 538 V547.5" stroke="#e0861e" stroke-width="1.1"/><path d="M180 538 V547.5" stroke="#e0861e" stroke-width="1.1"/><path d="M195 538 V547.5" stroke="#e0861e" stroke-width="1.1"/><path d="M210 538 V547.5" stroke="#e0861e" stroke-width="1.1"/><path d="M225 538 V547.5" stroke="#e0861e" stroke-width="1.1"/><path d="M240 538 V547.5" stroke="#e0861e" stroke-width="1.1"/><path d="M255 538 V547.5" stroke="#e0861e" stroke-width="1.1"/><path d="M270 538 V547.5" stroke="#e0861e" stroke-width="1.1"/><path d="M285 538 V547.5" stroke="#e0861e" stroke-width="1.1"/><path d="M300 538 V547.5" stroke="#e0861e" stroke-width="1.1"/><path d="M150 548.0 H305" stroke="#e0861e" stroke-width="1.1"/><path d="M158 547.5 V557" stroke="#e0861e" stroke-width="1.1"/><path d="M173 547.5 V557" stroke="#e0861e" stroke-width="1.1"/><path d="M188 547.5 V557" stroke="#e0861e" stroke-width="1.1"/><path d="M203 547.5 V557" stroke="#e0861e" stroke-width="1.1"/><path d="M218 547.5 V557" stroke="#e0861e" stroke-width="1.1"/><path d="M233 547.5 V557" stroke="#e0861e" stroke-width="1.1"/><path d="M248 547.5 V557" stroke="#e0861e" stroke-width="1.1"/><path d="M263 547.5 V557" stroke="#e0861e" stroke-width="1.1"/><path d="M278 547.5 V557" stroke="#e0861e" stroke-width="1.1"/><path d="M293 547.5 V557" stroke="#e0861e" stroke-width="1.1"/><path d="M156 499 H300 V512 H156 Z" fill="#f8c060" opacity="0.35"/></g>
<rect x="153" y="493" width="9" height="7" fill="#f8c868"/>
<rect x="153" y="498" width="9" height="2" fill="#e89a30"/>
<rect x="168" y="493" width="9" height="7" fill="#f8c868"/>
<rect x="168" y="498" width="9" height="2" fill="#e89a30"/>
<rect x="184" y="493" width="9" height="7" fill="#f8c868"/>
<rect x="184" y="498" width="9" height="2" fill="#e89a30"/>
<rect x="200" y="493" width="9" height="7" fill="#f8c868"/>
<rect x="200" y="498" width="9" height="2" fill="#e89a30"/>
<rect x="216" y="493" width="9" height="7" fill="#f8c868"/>
<rect x="216" y="498" width="9" height="2" fill="#e89a30"/>
<rect x="232" y="493" width="9" height="7" fill="#f8c868"/>
<rect x="232" y="498" width="9" height="2" fill="#e89a30"/>
<path d="M150 499.5 H262" stroke="#f8c868" stroke-width="2"/>
<path d="M233 556 V540 Q234 527 251 527 Q269 527 270 540 V556 Z" fill="#7d4a9e"/>
<path d="M246 556 V542 Q248 529 260 529 Q270 531 270 542 V556 Z" fill="#c8702c"/>
<ellipse cx="261" cy="538" rx="8.5" ry="6.5" fill="#f4e0b0"/>
<path d="M252.5 539 Q261 548 269.5 539 Q268 552 258 552 Q252 548 252.5 539 Z" fill="#d87828"/>
<path d="M235 556 Q250 548 268 556 Z" fill="#9a68c0"/>
<path d="M218 478 Q240 492 262 498 Q286 508 312 548 L302 557 Q282 516 259 507 Q237 501 221 489 Z" fill="#f0a030"/>
<path d="M218 478 Q240 492 262 498 Q286 508 312 548 L309 550 Q284 512 260 502 Q238 496 219 482 Z" fill="#f8c868"/>
<path d="M221 489 Q237 501 259 507 Q282 516 302 557 L298 558 Q279 520 257 511 Q236 505 221 493 Z" fill="#d88420"/>
<path d="M290.0 534.0 L297.0 529.0" stroke="#fbe0a0" stroke-width="1.3"/>
<path d="M294.5 540.5 L301.5 535.5" stroke="#fbe0a0" stroke-width="1.3"/>
<path d="M299.0 547.0 L306.0 542.0" stroke="#fbe0a0" stroke-width="1.3"/>
<path d="M303.5 553.5 L310.5 548.5" stroke="#fbe0a0" stroke-width="1.3"/>
<path d="M148 512 H170 V524 H148 Z" fill="#f4b44c"/>
<path d="M148 510 Q160 507 171 511 V516 Q160 519 148 516 Z" fill="#fbdc98"/>
<path d="M148 530 Q170 520 184 534 Q190 548 186 562 L148 566 Z" fill="#e8953a"/>
<path d="M148 541 Q170 544 187 538" stroke="#d07a24" stroke-width="1" fill="none"/>
<path d="M148 550 Q170 553 187 547" stroke="#d07a24" stroke-width="1" fill="none"/>
<path d="M148 559 Q170 562 187 556" stroke="#d07a24" stroke-width="1" fill="none"/>
<path d="M150 524 Q166 516 180 524 Q186 530 183 536 Q176 528 166 534 Q158 538 148 531 Z" fill="#c86a3a"/>
<path d="M148 529 Q156 536 164 532 Q174 526 184 534" stroke="#fbdc98" stroke-width="2.6" fill="none"/>
<circle cx="196" cy="559" r="10.5" fill="#ee8a1e"/>
<circle cx="195" cy="558" r="8.2" fill="#f6a838"/>
<path d="M189.7 560.0 Q190.8 551.1 199.2 551.6" stroke="#fbe4a8" stroke-width="1.8" fill="none"/>
<path d="M193.9 563.2 Q196.0 555.9 201.8 555.3" stroke="#fbd488" stroke-width="1.2" fill="none"/>
<circle cx="179" cy="567" r="11.5" fill="#ee8a1e"/>
<circle cx="178" cy="566" r="9.0" fill="#f6a838"/>
<path d="M172.1 568.1 Q173.2 558.4 182.4 559.0" stroke="#fbe4a8" stroke-width="1.8" fill="none"/>
<path d="M176.7 571.6 Q179.0 563.5 185.3 563.0" stroke="#fbd488" stroke-width="1.2" fill="none"/>
<circle cx="157" cy="574" r="13" fill="#ee8a1e"/>
<circle cx="156" cy="573" r="10.1" fill="#f6a838"/>
<path d="M149.2 575.3 Q150.5 564.2 160.9 564.9" stroke="#fbe4a8" stroke-width="1.8" fill="none"/>
<path d="M154.4 579.2 Q157.0 570.1 164.2 569.5" stroke="#fbd488" stroke-width="1.2" fill="none"/><path d="M303 498 Q305 508 311 514 Q318 522 314 532 Q310 540 305 539 Q298 534 297 524 Q297 514 302 508 Q303 503 303 498 Z" fill="#3e9a38"/>
<path d="M303 499 Q304 508 308 513 Q304 516 300 512 Q302 506 303 499 Z" fill="#9ad84c"/>
<path d="M300 516 Q306 520 312 518 Q315 526 311 534 Q305 536 300 528 Z" fill="#2e8a34" opacity="0.8"/>
<path d="M256 599 Q266 593 279 594 Q282 598 276 600 Q264 602 256 599 Z" fill="#cfa07c" opacity="0.6" filter="url(#blur1)"/>
<path d="M252 588 Q252 582.5 260 581.2 Q266 579.5 268.8 580.2 L270.6 576.2 L270.8 583 Q271.2 590 266 592 Q260 594 257.4 595 L254 599.6 Q251.4 594 252 588 Z" fill="#ece8ee"/>
<path d="M252.2 587 Q256 585 258 588 L256.6 594 L254 599 Q251.6 594 252.2 587 Z" fill="#d8cce0"/>
<path d="M258 588 Q264 591 270 588 M262 581.4 Q266 583 269.6 583" stroke="#b6a4bc" stroke-width="0.9" fill="none"/>
<polygon points="293.6,615.6 298.8,623.4 311.3,621.9 301.9,627.7 307.8,635.3 296.8,631.0 288.0,637.2 290.6,628.8 279.3,625.0 291.8,624.1" fill="#e2564c" stroke="#e2564c" stroke-width="1" stroke-linejoin="round"/>
<polygon points="294.7,620.9 297.4,625.2 304.1,624.3 299.0,627.4 302.3,631.4 296.4,629.0 291.8,632.4 293.3,627.9 287.1,625.9 293.9,625.5" fill="#f08a7c" stroke="#f08a7c" stroke-width="1" stroke-linejoin="round"/>
<polygon points="459.7,479.0 456.9,486.9 479.0,487.5 457.2,489.0 462.3,496.7 451.7,489.7 432.8,493.9 448.0,488.1 431.2,482.9 451.2,486.3" fill="#ea8c38" stroke="#ea8c38" stroke-width="1" stroke-linejoin="round"/>
<polygon points="456.1,483.8 454.9,487.4 465.0,487.8 455.1,488.5 457.3,492.0 452.4,488.9 443.7,490.7 450.5,488.0 442.9,485.6 452.1,487.2" fill="#f4b868" stroke="#f4b868" stroke-width="1" stroke-linejoin="round"/>
<polygon points="384.6,429.7 384.2,434.2 396.9,434.2 384.6,435.5 388.6,439.9 381.5,436.1 371.2,438.8 379.0,435.2 368.8,432.5 380.7,434.0" fill="#ec9a40" stroke="#ec9a40" stroke-width="1" stroke-linejoin="round"/>
<path d="M468 451 Q474 447 478 443 Q480 448 482 451 Q476 454 468 451 Z" fill="#e6e2e0"/>
<path d="M468 452 Q476 455 483 452" stroke="#c8b8a0" stroke-width="1" fill="none"/>
<path d="M393 598 Q386 588 392 578 Q402 570 398 560 Q392 550 397 536 Q402 548 406 556 Q408 566 402 574 Q410 572 410 564 Q412 576 404 584 Q400 592 402 600 Z" fill="#4aa02c"/>
<path d="M397 538 Q400 550 404 557 Q406 566 400 574 Q398 566 400 560 Q396 550 397 538 Z" fill="#7ac83c"/>
<path d="M388 590 Q392 580 398 578 Q404 584 402 598 L392 598 Z" fill="#3c8c28"/>
<path d="M427 590 Q428 578 424 572 Q418 566 417 560 Q424 564 428 570 Q430 560 437 552 Q438 566 434 576 Q432 584 434 590 Z" fill="#3f9a2a"/>
<path d="M431 574 Q432 562 437 553 Q437 566 434 576 Z" fill="#7cc83e"/>
<path d="M419 568 Q424 566 427 574 L427 582 Q424 574 419 568 Z" fill="#58b032"/>
<ellipse cx="412" cy="617" rx="52" ry="5" fill="#d8a880" opacity="0.45"/>
<path d="M359 607 Q372 602 392 606 Q402 610 404 614 Q392 622 372 619 Q360 615 359 607 Z" fill="#e85c3c"/>
<path d="M362 608 Q376 606 392 611 Q384 616 372 615 Q364 613 362 608 Z" fill="#f6c0b0"/>
<path d="M362 601 Q370 592 384 593 Q398 595 405 606 Q404 612 396 613 Q384 606 366 607 Q361 605 362 601 Z" fill="#f4b4a4"/>
<path d="M372 594 Q376 600 374 606 M384 594 Q388 600 388 608 M394 597 Q398 604 398 611" stroke="#e88878" stroke-width="1.1" fill="none"/>
<path d="M404 612 Q420 620 440 616 Q452 612 456 604 L404 606 Z" fill="#e8583a"/>
<path d="M402 603 Q404 592 420 588 Q440 585 452 594 Q458 600 456 606 Q444 614 424 613 Q406 612 402 603 Z" fill="#f4b0a0"/>
<path d="M420 588 Q440 585 452 594 Q440 590 424 592 Z" fill="#f07c64"/>
<path d="M414 592 Q410 602 414 610 M426 589 Q424 601 428 612 M438 589 Q440 600 440 612 M448 592 Q452 600 450 609" stroke="#e67a68" stroke-width="1.2" fill="none"/>
<path d="M342 673 Q350 662 366 658 Q380 654 388 662 Q396 668 400 673 Z" fill="#f0c070"/>
<path d="M350 673 L356 663 M360 673 L366 659 M372 673 L378 657" stroke="#fbeccc" stroke-width="3"/>
<path d="M384 660 Q392 666 400 673 L388 673 Z" fill="#e89848"/>
<path d="M472 673 Q473 664 488 662.5 Q506 661 512 667 Q514 671 512 673 Z" fill="#a68a98"/>
<path d="M476 667 Q488 663 504 664" stroke="#c8b0bc" stroke-width="1.2" fill="none"/>
<path d="M505 673 Q512 668.5 524 669 Q533 670 535 673 Z" fill="#e4d4d0"/><path d="M270.1 170.0 Q259.7 199.2 251.2 228.4 Q263.5 199.2 273.9 170.0 Z" fill="#1f7208"/>
<path d="M273.4 170.0 Q267.7 200.5 264.5 230.9 Q272.8 200.5 278.6 170.0 Z" fill="#5ab024"/>
<path d="M277.8 170.0 Q269.8 199.9 264.0 229.9 Q274.2 199.9 282.2 170.0 Z" fill="#2a8010"/>
<path d="M281.4 170.0 Q274.1 200.1 269.5 230.3 Q279.4 200.1 286.6 170.0 Z" fill="#2a8010"/>
<path d="M286.2 170.0 Q282.8 190.6 281.1 211.2 Q286.3 190.6 289.8 170.0 Z" fill="#4aa61e"/>
<path d="M289.3 170.0 Q284.8 193.0 282.9 216.0 Q290.1 193.0 294.7 170.0 Z" fill="#1f7208"/>
<path d="M293.3 170.0 Q290.4 189.9 290.2 209.9 Q295.8 189.9 298.7 170.0 Z" fill="#2f8c14"/>
<path d="M298.1 170.0 Q293.2 191.0 290.1 212.1 Q296.9 191.0 301.9 170.0 Z" fill="#2f8c14"/>
<path d="M301.8 170.0 Q297.7 190.5 295.9 210.9 Q302.2 190.5 306.2 170.0 Z" fill="#1f7208"/>
<path d="M305.4 170.0 Q303.3 191.6 303.8 213.1 Q308.4 191.6 310.6 170.0 Z" fill="#5ab024"/>
<path d="M309.8 170.0 Q305.9 187.6 304.3 205.3 Q310.4 187.6 314.2 170.0 Z" fill="#3c9a18"/>
<path d="M313.8 170.0 Q310.4 187.9 309.3 205.8 Q314.8 187.9 318.2 170.0 Z" fill="#5ab024"/>
<path d="M317.9 170.0 Q316.2 192.8 316.6 215.6 Q320.4 192.8 322.1 170.0 Z" fill="#2a8010"/>
<path d="M322.2 170.0 Q319.7 187.0 319.0 204.1 Q323.4 187.0 325.8 170.0 Z" fill="#1f7208"/>
<path d="M325.6 170.0 Q324.5 188.0 325.8 206.0 Q329.3 188.0 330.4 170.0 Z" fill="#2a8010"/>
<path d="M330.1 170.0 Q329.7 188.9 331.2 207.8 Q333.5 188.9 333.9 170.0 Z" fill="#5ab024"/>
<path d="M333.4 170.0 Q331.9 186.9 333.0 203.8 Q337.1 186.9 338.6 170.0 Z" fill="#5ab024"/>
<path d="M337.9 170.0 Q336.7 190.9 337.7 211.8 Q340.9 190.9 342.1 170.0 Z" fill="#2f8c14"/>
<path d="M342.2 170.0 Q342.4 186.1 344.4 202.3 Q346.0 186.1 345.8 170.0 Z" fill="#4aa61e"/>
<path d="M345.4 170.0 Q344.0 186.2 345.4 202.4 Q349.3 186.2 350.6 170.0 Z" fill="#3c9a18"/>
<path d="M349.3 170.0 Q350.3 187.8 354.0 205.5 Q355.7 187.8 354.7 170.0 Z" fill="#2f8c14"/>
<path d="M353.9 170.0 Q353.3 184.2 354.7 198.3 Q357.4 184.2 358.1 170.0 Z" fill="#2f8c14"/>
<path d="M357.4 170.0 Q358.0 187.9 361.3 205.8 Q363.2 187.9 362.6 170.0 Z" fill="#5ab024"/>
<path d="M361.8 170.0 Q362.9 184.9 366.2 199.8 Q367.3 184.9 366.2 170.0 Z" fill="#2a8010"/>
<path d="M366.2 170.0 Q367.8 184.2 371.2 198.4 Q371.4 184.2 369.8 170.0 Z" fill="#1f7208"/>
<path d="M370.1 170.0 Q371.6 181.6 374.9 193.2 Q375.3 181.6 373.9 170.0 Z" fill="#5ab024"/><clipPath id="ctrunk"><path d="M414.0 176.0 C416.3 177.7 424.0 182.3 428.0 186.0 C432.0 189.7 434.8 187.3 438.0 198.0 C441.2 208.7 444.3 233.0 447.0 250.0 C449.7 267.0 452.2 288.3 454.0 300.0 C455.8 311.7 456.5 313.3 458.0 320.0 C459.5 326.7 460.3 333.3 463.0 340.0 C465.7 346.7 470.2 353.3 474.0 360.0 C477.8 366.7 482.5 373.3 486.0 380.0 C489.5 386.7 492.3 393.3 495.0 400.0 C497.7 406.7 498.8 413.3 502.0 420.0 C505.2 426.7 509.7 435.0 514.0 440.0 C518.3 445.0 523.7 446.7 528.0 450.0 C532.3 453.3 535.0 455.0 540.0 460.0 C545.0 465.0 551.3 473.3 558.0 480.0 C564.7 486.7 574.7 495.3 580.0 500.0 C585.3 504.7 588.3 506.7 590.0 508.0 L590.0 428.0 C588.7 426.7 586.3 424.7 582.0 420.0 C577.7 415.3 571.0 406.7 564.0 400.0 C557.0 393.3 545.8 386.7 540.0 380.0 C534.2 373.3 532.7 366.7 529.0 360.0 C525.3 353.3 521.5 346.7 518.0 340.0 C514.5 333.3 511.7 326.7 508.0 320.0 C504.3 313.3 501.0 311.7 496.0 300.0 C491.0 288.3 482.2 266.7 478.0 250.0 C473.8 233.3 472.3 212.3 471.0 200.0 C469.7 187.7 470.2 180.0 470.0 176.0 Z"/></clipPath>
<path d="M414.0 176.0 C416.3 177.7 424.0 182.3 428.0 186.0 C432.0 189.7 434.8 187.3 438.0 198.0 C441.2 208.7 444.3 233.0 447.0 250.0 C449.7 267.0 452.2 288.3 454.0 300.0 C455.8 311.7 456.5 313.3 458.0 320.0 C459.5 326.7 460.3 333.3 463.0 340.0 C465.7 346.7 470.2 353.3 474.0 360.0 C477.8 366.7 482.5 373.3 486.0 380.0 C489.5 386.7 492.3 393.3 495.0 400.0 C497.7 406.7 498.8 413.3 502.0 420.0 C505.2 426.7 509.7 435.0 514.0 440.0 C518.3 445.0 523.7 446.7 528.0 450.0 C532.3 453.3 535.0 455.0 540.0 460.0 C545.0 465.0 551.3 473.3 558.0 480.0 C564.7 486.7 574.7 495.3 580.0 500.0 C585.3 504.7 588.3 506.7 590.0 508.0 L590.0 428.0 C588.7 426.7 586.3 424.7 582.0 420.0 C577.7 415.3 571.0 406.7 564.0 400.0 C557.0 393.3 545.8 386.7 540.0 380.0 C534.2 373.3 532.7 366.7 529.0 360.0 C525.3 353.3 521.5 346.7 518.0 340.0 C514.5 333.3 511.7 326.7 508.0 320.0 C504.3 313.3 501.0 311.7 496.0 300.0 C491.0 288.3 482.2 266.7 478.0 250.0 C473.8 233.3 472.3 212.3 471.0 200.0 C469.7 187.7 470.2 180.0 470.0 176.0 Z" fill="#827462"/>
<filter id="blurT"><feGaussianBlur stdDeviation="0.6"/></filter><g clip-path="url(#ctrunk)"><g filter="url(#blurT)">
<path d="M586.0 170.0 Q617.5 161.7 650.1 161.1" stroke="#d3c8b6" stroke-width="4.2" fill="none" stroke-linecap="round" opacity="0.62"/>
<path d="M586.0 173.8 Q607.2 167.1 629.5 167.8" stroke="#66584b" stroke-width="2.0" fill="none" stroke-linecap="round" opacity="0.78"/>
<path d="M412.1 177.5 Q450.6 167.4 490.3 166.5" stroke="#d3c8b6" stroke-width="3.7" fill="none" stroke-linecap="round" opacity="0.77"/>
<path d="M417.5 181.4 Q455.8 170.4 495.7 170.3" stroke="#5e5145" stroke-width="1.9" fill="none" stroke-linecap="round" opacity="0.66"/>
<path d="M433.5 182.9 Q454.7 175.2 477.3 176.7" stroke="#e6dfd4" stroke-width="3.7" fill="none" stroke-linecap="round" opacity="0.69"/>
<path d="M427.4 187.7 Q460.8 177.8 495.7 177.8" stroke="#5e5145" stroke-width="2.5" fill="none" stroke-linecap="round" opacity="0.52"/>
<path d="M428.8 191.8 Q452.5 182.4 477.9 184.6" stroke="#b5a894" stroke-width="2.0" fill="none" stroke-linecap="round" opacity="0.62"/>
<path d="M432.2 195.8 Q456.5 189.9 481.6 188.5" stroke="#66584b" stroke-width="3.7" fill="none" stroke-linecap="round" opacity="0.59"/>
<path d="M434.1 198.4 Q463.4 191.5 493.5 189.5" stroke="#dcd3c5" stroke-width="3.8" fill="none" stroke-linecap="round" opacity="0.55"/>
<path d="M434.6 201.6 Q455.8 194.3 478.2 195.1" stroke="#66584b" stroke-width="2.8" fill="none" stroke-linecap="round" opacity="0.63"/>
<path d="M435.2 204.7 Q467.3 195.4 500.6 194.8" stroke="#cbbfad" stroke-width="2.5" fill="none" stroke-linecap="round" opacity="0.69"/>
<path d="M437.9 208.3 Q458.6 202.1 480.1 201.9" stroke="#5e5145" stroke-width="2.6" fill="none" stroke-linecap="round" opacity="0.60"/>
<path d="M436.3 211.2 Q458.2 203.4 481.4 204.3" stroke="#bfb19d" stroke-width="3.6" fill="none" stroke-linecap="round" opacity="0.59"/>
<path d="M439.7 214.2 Q472.4 204.6 506.5 203.9" stroke="#4f443a" stroke-width="4.0" fill="none" stroke-linecap="round" opacity="0.79"/>
<path d="M437.4 217.5 Q469.2 209.7 501.9 207.5" stroke="#e6dfd4" stroke-width="4.3" fill="none" stroke-linecap="round" opacity="0.76"/>
<path d="M437.9 220.6 Q471.8 209.4 507.6 209.7" stroke="#66584b" stroke-width="3.6" fill="none" stroke-linecap="round" opacity="0.64"/>
<path d="M448.7 222.2 Q477.5 211.8 508.1 212.8" stroke="#cbbfad" stroke-width="2.3" fill="none" stroke-linecap="round" opacity="0.72"/>
<path d="M440.6 227.1 Q473.8 216.1 508.7 216.3" stroke="#594c41" stroke-width="2.0" fill="none" stroke-linecap="round" opacity="0.64"/>
<path d="M439.6 230.2 Q473.7 220.6 509.2 219.1" stroke="#dcd3c5" stroke-width="2.2" fill="none" stroke-linecap="round" opacity="0.60"/>
<path d="M440.1 233.4 Q465.6 223.5 493.0 224.9" stroke="#5e5145" stroke-width="1.9" fill="none" stroke-linecap="round" opacity="0.51"/>
<path d="M460.9 234.2 Q485.0 225.7 510.4 226.2" stroke="#e6dfd4" stroke-width="2.2" fill="none" stroke-linecap="round" opacity="0.66"/>
<path d="M441.3 240.1 Q475.5 231.0 510.9 228.7" stroke="#594c41" stroke-width="4.0" fill="none" stroke-linecap="round" opacity="0.76"/>
<path d="M461.0 240.6 Q485.5 231.8 511.5 232.3" stroke="#cbbfad" stroke-width="4.3" fill="none" stroke-linecap="round" opacity="0.70"/>
<path d="M454.5 245.6 Q472.3 238.3 491.5 239.5" stroke="#5e5145" stroke-width="2.0" fill="none" stroke-linecap="round" opacity="0.53"/>
<path d="M443.0 250.2 Q477.3 241.1 512.6 238.6" stroke="#b5a894" stroke-width="3.8" fill="none" stroke-linecap="round" opacity="0.71"/>
<path d="M443.5 253.4 Q477.6 243.6 513.1 241.7" stroke="#4f443a" stroke-width="3.2" fill="none" stroke-linecap="round" opacity="0.67"/>
<path d="M454.3 254.5 Q480.5 247.0 507.8 245.4" stroke="#cbbfad" stroke-width="3.0" fill="none" stroke-linecap="round" opacity="0.60"/>
<path d="M444.4 259.8 Q467.3 250.0 492.2 251.6" stroke="#736452" stroke-width="3.9" fill="none" stroke-linecap="round" opacity="0.61"/>
<path d="M444.9 263.4 Q478.8 252.2 514.4 251.4" stroke="#dcd3c5" stroke-width="4.3" fill="none" stroke-linecap="round" opacity="0.68"/>
<path d="M445.4 266.8 Q479.5 256.9 514.9 254.8" stroke="#594c41" stroke-width="3.5" fill="none" stroke-linecap="round" opacity="0.83"/>
<path d="M445.8 269.7 Q480.0 260.6 515.3 257.6" stroke="#dcd3c5" stroke-width="4.2" fill="none" stroke-linecap="round" opacity="0.68"/>
<path d="M461.2 270.4 Q480.9 263.6 501.9 263.3" stroke="#594c41" stroke-width="2.5" fill="none" stroke-linecap="round" opacity="0.71"/>
<path d="M446.7 276.7 Q480.7 266.0 516.3 264.4" stroke="#d3c8b6" stroke-width="2.0" fill="none" stroke-linecap="round" opacity="0.60"/>
<path d="M447.2 279.9 Q469.2 273.4 492.0 271.9" stroke="#594c41" stroke-width="4.2" fill="none" stroke-linecap="round" opacity="0.54"/>
<path d="M447.5 282.5 Q471.4 275.9 496.0 273.8" stroke="#dcd3c5" stroke-width="2.5" fill="none" stroke-linecap="round" opacity="0.72"/>
<path d="M447.9 285.2 Q481.8 274.2 517.5 272.7" stroke="#66584b" stroke-width="2.3" fill="none" stroke-linecap="round" opacity="0.77"/>
<path d="M458.8 286.7 Q474.0 278.5 491.1 280.9" stroke="#b5a894" stroke-width="4.4" fill="none" stroke-linecap="round" opacity="0.58"/>
<path d="M451.7 292.2 Q484.3 281.6 518.5 280.0" stroke="#594c41" stroke-width="2.7" fill="none" stroke-linecap="round" opacity="0.70"/>
<path d="M469.2 293.0 Q493.3 283.9 519.0 283.9" stroke="#dcd3c5" stroke-width="2.3" fill="none" stroke-linecap="round" opacity="0.85"/>
<path d="M452.7 300.0 Q485.4 290.0 519.5 286.9" stroke="#594c41" stroke-width="4.1" fill="none" stroke-linecap="round" opacity="0.69"/>
<path d="M450.9 304.3 Q481.2 294.8 512.8 292.0" stroke="#cbbfad" stroke-width="2.1" fill="none" stroke-linecap="round" opacity="0.67"/>
<path d="M451.5 307.4 Q472.5 297.6 495.7 298.6" stroke="#736452" stroke-width="3.7" fill="none" stroke-linecap="round" opacity="0.56"/>
<path d="M455.0 309.9 Q487.4 299.1 521.5 296.3" stroke="#b5a894" stroke-width="3.3" fill="none" stroke-linecap="round" opacity="0.79"/>
<path d="M464.8 311.2 Q487.6 302.6 511.9 301.4" stroke="#5e5145" stroke-width="2.5" fill="none" stroke-linecap="round" opacity="0.76"/>
<path d="M453.4 317.2 Q479.6 308.4 507.1 305.9" stroke="#e6dfd4" stroke-width="4.5" fill="none" stroke-linecap="round" opacity="0.85"/>
<path d="M454.2 320.7 Q488.0 309.2 523.5 305.9" stroke="#4f443a" stroke-width="3.2" fill="none" stroke-linecap="round" opacity="0.57"/>
<path d="M455.0 324.1 Q473.2 314.1 493.9 315.6" stroke="#d3c8b6" stroke-width="4.4" fill="none" stroke-linecap="round" opacity="0.74"/>
<path d="M456.1 328.2 Q490.6 317.9 526.2 312.8" stroke="#5e5145" stroke-width="2.9" fill="none" stroke-linecap="round" opacity="0.82"/>
<path d="M457.0 332.1 Q491.9 320.2 528.5 316.1" stroke="#bfb19d" stroke-width="3.2" fill="none" stroke-linecap="round" opacity="0.84"/>
<path d="M458.0 336.2 Q493.9 325.2 531.0 319.6" stroke="#5e5145" stroke-width="2.0" fill="none" stroke-linecap="round" opacity="0.59"/>
<path d="M459.9 339.9 Q496.1 329.5 533.3 323.0" stroke="#bfb19d" stroke-width="3.2" fill="none" stroke-linecap="round" opacity="0.67"/>
<path d="M461.2 344.0 Q482.5 334.9 505.6 333.6" stroke="#4f443a" stroke-width="4.1" fill="none" stroke-linecap="round" opacity="0.75"/>
<path d="M463.8 348.7 Q495.2 336.6 528.7 333.2" stroke="#d3c8b6" stroke-width="3.1" fill="none" stroke-linecap="round" opacity="0.77"/>
<path d="M466.1 353.0 Q494.1 340.6 524.5 338.8" stroke="#66584b" stroke-width="5.0" fill="none" stroke-linecap="round" opacity="0.72"/>
<path d="M468.2 356.8 Q500.8 345.9 534.7 340.4" stroke="#dcd3c5" stroke-width="5.6" fill="none" stroke-linecap="round" opacity="0.60"/>
<path d="M476.0 359.1 Q508.4 345.5 543.4 342.2" stroke="#736452" stroke-width="4.2" fill="none" stroke-linecap="round" opacity="0.75"/>
<path d="M490.0 359.8 Q516.6 348.6 545.4 345.8" stroke="#bfb19d" stroke-width="6.1" fill="none" stroke-linecap="round" opacity="0.89"/>
<path d="M474.7 367.8 Q500.8 356.2 529.3 353.8" stroke="#66584b" stroke-width="5.3" fill="none" stroke-linecap="round" opacity="0.67"/>
<path d="M490.1 367.9 Q509.7 359.9 530.6 357.4" stroke="#cbbfad" stroke-width="3.7" fill="none" stroke-linecap="round" opacity="0.84"/>
<path d="M482.6 376.9 Q516.1 362.0 552.6 358.3" stroke="#736452" stroke-width="3.1" fill="none" stroke-linecap="round" opacity="0.53"/>
<path d="M483.0 382.3 Q518.4 369.8 555.2 362.8" stroke="#bfb19d" stroke-width="3.2" fill="none" stroke-linecap="round" opacity="0.80"/>
<path d="M485.8 388.5 Q520.9 373.7 558.6 368.5" stroke="#736452" stroke-width="6.7" fill="none" stroke-linecap="round" opacity="0.71"/>
<path d="M494.9 390.8 Q526.5 376.4 560.9 372.3" stroke="#b5a894" stroke-width="7.6" fill="none" stroke-linecap="round" opacity="0.75"/>
<path d="M489.9 397.5 Q525.3 382.2 563.5 376.6" stroke="#4f443a" stroke-width="7.1" fill="none" stroke-linecap="round" opacity="0.76"/>
<path d="M509.8 398.3 Q563.5 374.8 620.4 360.2" stroke="#e6dfd4" stroke-width="7.2" fill="none" stroke-linecap="round" opacity="0.69"/>
<path d="M494.8 410.9 Q562.0 377.3 632.2 350.7" stroke="#594c41" stroke-width="7.1" fill="none" stroke-linecap="round" opacity="0.85"/>
<path d="M497.4 418.2 Q560.3 377.0 628.9 346.1" stroke="#bfb19d" stroke-width="5.2" fill="none" stroke-linecap="round" opacity="0.78"/>
<path d="M500.6 424.4 Q560.2 378.4 626.3 342.6" stroke="#66584b" stroke-width="6.3" fill="none" stroke-linecap="round" opacity="0.77"/>
<path d="M505.1 431.8 Q553.0 390.2 604.6 353.3" stroke="#e6dfd4" stroke-width="6.0" fill="none" stroke-linecap="round" opacity="0.82"/>
<path d="M509.0 438.3 Q561.9 385.0 619.0 336.4" stroke="#4f443a" stroke-width="5.6" fill="none" stroke-linecap="round" opacity="0.68"/>
<path d="M518.0 445.7 Q556.4 398.8 602.3 359.3" stroke="#cbbfad" stroke-width="6.2" fill="none" stroke-linecap="round" opacity="0.78"/>
<path d="M527.8 453.1 Q558.8 410.0 598.5 374.7" stroke="#736452" stroke-width="5.6" fill="none" stroke-linecap="round" opacity="0.71"/>
<path d="M534.6 458.8 Q580.4 399.4 631.7 344.5" stroke="#bfb19d" stroke-width="5.3" fill="none" stroke-linecap="round" opacity="0.65"/>
<path d="M540.8 465.3 Q585.2 404.7 637.2 350.4" stroke="#4f443a" stroke-width="3.4" fill="none" stroke-linecap="round" opacity="0.77"/>
<path d="M558.2 457.4 Q577.3 429.6 601.4 405.9" stroke="#e6dfd4" stroke-width="3.8" fill="none" stroke-linecap="round" opacity="0.90"/>
<path d="M553.0 478.9 Q584.8 434.9 622.6 395.9" stroke="#66584b" stroke-width="3.4" fill="none" stroke-linecap="round" opacity="0.53"/>
<path d="M564.6 480.9 Q590.1 443.0 622.9 411.4" stroke="#cbbfad" stroke-width="6.5" fill="none" stroke-linecap="round" opacity="0.71"/>
<path d="M565.9 490.8 Q612.2 431.8 662.3 375.9" stroke="#736452" stroke-width="3.8" fill="none" stroke-linecap="round" opacity="0.65"/>
<path d="M592.5 473.6 Q627.1 424.7 669.2 382.2" stroke="#dcd3c5" stroke-width="8.1" fill="none" stroke-linecap="round" opacity="0.81"/>
<path d="M578.7 502.2 Q616.9 449.7 662.0 402.9" stroke="#4f443a" stroke-width="4.4" fill="none" stroke-linecap="round" opacity="0.71"/>
<path d="M591.5 502.3 Q634.7 446.2 682.4 393.9" stroke="#dcd3c5" stroke-width="6.0" fill="none" stroke-linecap="round" opacity="0.78"/>
<path d="M604.2 492.1 Q641.0 443.6 682.4 398.9" stroke="#594c41" stroke-width="5.9" fill="none" stroke-linecap="round" opacity="0.54"/>
<path d="M586.0 519.9 Q630.6 459.4 682.4 405.0" stroke="#d3c8b6" stroke-width="4.7" fill="none" stroke-linecap="round" opacity="0.89"/>
<path d="M586.0 525.8 Q631.2 465.8 682.4 410.9" stroke="#66584b" stroke-width="6.9" fill="none" stroke-linecap="round" opacity="0.53"/>
<path d="M604.0 509.0 Q622.8 480.8 647.3 457.5" stroke="#bfb19d" stroke-width="5.4" fill="none" stroke-linecap="round" opacity="0.60"/>
<path d="M603.3 514.7 Q639.0 464.3 682.4 420.4" stroke="#66584b" stroke-width="5.1" fill="none" stroke-linecap="round" opacity="0.63"/>
<path d="M588.3 537.2 Q632.1 478.4 682.4 425.0" stroke="#e6dfd4" stroke-width="7.4" fill="none" stroke-linecap="round" opacity="0.71"/>
<path d="M586.0 546.9 Q629.9 485.8 682.4 432.0" stroke="#5e5145" stroke-width="3.6" fill="none" stroke-linecap="round" opacity="0.61"/>
<path d="M594.2 543.8 Q635.7 489.0 682.4 438.7" stroke="#b5a894" stroke-width="5.1" fill="none" stroke-linecap="round" opacity="0.87"/>
<path d="M586.0 558.9 Q626.3 503.6 673.8 454.3" stroke="#4f443a" stroke-width="5.1" fill="none" stroke-linecap="round" opacity="0.78"/>
</g>
<linearGradient id="gtd" x1="0" y1="176" x2="0" y2="300" gradientUnits="userSpaceOnUse"><stop offset="0" stop-color="#4a3c30" stop-opacity="0.55"/><stop offset="0.5" stop-color="#4a3c30" stop-opacity="0.25"/><stop offset="1" stop-color="#4a3c30" stop-opacity="0"/></linearGradient><rect x="400" y="176" width="120" height="130" fill="url(#gtd)"/>
<path d="M414.0 176.0 C416.3 177.7 424.0 182.3 428.0 186.0 C432.0 189.7 434.8 187.3 438.0 198.0 C441.2 208.7 444.3 233.0 447.0 250.0 C449.7 267.0 452.2 288.3 454.0 300.0 C455.8 311.7 456.5 313.3 458.0 320.0 C459.5 326.7 460.3 333.3 463.0 340.0 C465.7 346.7 470.2 353.3 474.0 360.0 C477.8 366.7 482.5 373.3 486.0 380.0 C489.5 386.7 492.3 393.3 495.0 400.0 C497.7 406.7 498.8 413.3 502.0 420.0 C505.2 426.7 509.7 435.0 514.0 440.0 C518.3 445.0 523.7 446.7 528.0 450.0 C532.3 453.3 535.0 455.0 540.0 460.0 C545.0 465.0 551.3 473.3 558.0 480.0 C564.7 486.7 574.7 495.3 580.0 500.0 C585.3 504.7 588.3 506.7 590.0 508.0" stroke="#4e4036" stroke-width="7" fill="none" opacity="0.4"/>
<path d="M590.0 428.0 C588.7 426.7 586.3 424.7 582.0 420.0 C577.7 415.3 571.0 406.7 564.0 400.0 C557.0 393.3 545.8 386.7 540.0 380.0 C534.2 373.3 532.7 366.7 529.0 360.0 C525.3 353.3 521.5 346.7 518.0 340.0 C514.5 333.3 511.7 326.7 508.0 320.0 C504.3 313.3 501.0 311.7 496.0 300.0 C491.0 288.3 482.2 266.7 478.0 250.0 C473.8 233.3 472.3 212.3 471.0 200.0 C469.7 187.7 470.2 180.0 470.0 176.0" stroke="#5a4a3c" stroke-width="4" fill="none" opacity="0.35"/>
</g><path d="M470 176 Q530 174 590 192" stroke="#6e6a3a" stroke-width="2.2" fill="none"/>
<path d="M478.0 175.0 Q478.3 188.3 487.9 204.6 Q483.2 188.3 482.0 175.0 Z" fill="#237508"/>
<path d="M480.0 177.0 Q481.2 188.3 487.9 200.6" stroke="#7cc22a" stroke-width="0.8" fill="none" opacity="0.8"/>
<path d="M481.2 175.0 Q481.1 191.1 492.2 210.8 Q487.1 191.1 486.2 175.0 Z" fill="#4aa61e"/>
<path d="M483.7 177.0 Q484.6 191.1 492.2 206.8" stroke="#7cc22a" stroke-width="0.8" fill="none" opacity="0.8"/>
<path d="M485.4 175.1 Q484.6 190.4 493.5 209.1 Q489.8 190.4 489.5 175.1 Z" fill="#237508"/>
<path d="M487.4 177.1 Q487.7 190.4 493.5 205.1" stroke="#7cc22a" stroke-width="0.8" fill="none" opacity="0.8"/>
<path d="M488.9 175.2 Q491.0 193.2 503.8 215.3 Q496.5 193.2 493.4 175.2 Z" fill="#237508"/>
<path d="M491.2 177.2 Q494.2 193.2 503.8 211.3" stroke="#7cc22a" stroke-width="0.8" fill="none" opacity="0.8"/>
<path d="M493.1 175.3 Q493.5 191.3 502.7 210.8 Q498.1 191.3 496.7 175.3 Z" fill="#237508"/>
<path d="M494.9 177.3 Q496.3 191.3 502.7 206.8" stroke="#7cc22a" stroke-width="0.8" fill="none" opacity="0.8"/>
<path d="M496.8 175.4 Q497.5 196.5 507.4 222.3 Q502.2 196.5 500.5 175.4 Z" fill="#237508"/>
<path d="M499.8 175.6 Q500.4 198.1 512.6 225.6 Q506.5 198.1 504.9 175.6 Z" fill="#4aa61e"/>
<path d="M504.3 175.9 Q504.9 197.8 514.2 224.6 Q509.4 197.8 507.8 175.9 Z" fill="#2a7f0e"/>
<path d="M506.1 177.9 Q507.6 197.8 514.2 220.6" stroke="#7cc22a" stroke-width="0.8" fill="none" opacity="0.8"/>
<path d="M507.2 176.1 Q509.5 196.2 523.7 220.8 Q515.6 196.2 512.4 176.1 Z" fill="#4aa61e"/>
<path d="M511.1 176.4 Q513.7 201.4 528.0 232.0 Q519.6 201.4 516.0 176.4 Z" fill="#237508"/>
<path d="M513.5 178.4 Q517.1 201.4 528.0 228.0" stroke="#7cc22a" stroke-width="0.8" fill="none" opacity="0.8"/>
<path d="M514.7 176.8 Q516.6 201.4 530.1 231.5 Q522.6 201.4 519.7 176.8 Z" fill="#3f9c18"/>
<path d="M518.8 177.2 Q521.9 199.5 536.0 226.8 Q527.3 199.5 523.2 177.2 Z" fill="#3f9c18"/>
<path d="M521.0 179.2 Q525.1 199.5 536.0 222.8" stroke="#7cc22a" stroke-width="0.8" fill="none" opacity="0.8"/>
<path d="M522.2 177.6 Q522.9 205.8 535.1 240.2 Q528.9 205.8 527.2 177.6 Z" fill="#237508"/>
<path d="M524.7 179.6 Q526.4 205.8 535.1 236.2" stroke="#7cc22a" stroke-width="0.8" fill="none" opacity="0.8"/>
<path d="M525.8 178.0 Q528.1 205.8 542.6 239.8 Q534.3 205.8 531.0 178.0 Z" fill="#2a7f0e"/>
<path d="M528.4 180.0 Q531.7 205.8 542.6 235.8" stroke="#7cc22a" stroke-width="0.8" fill="none" opacity="0.8"/>
<path d="M529.5 178.5 Q530.6 204.2 543.5 235.7 Q536.8 204.2 534.7 178.5 Z" fill="#2c8a10"/>
<path d="M532.1 180.5 Q534.2 204.2 543.5 231.7" stroke="#7cc22a" stroke-width="0.8" fill="none" opacity="0.8"/>
<path d="M534.2 179.0 Q536.5 205.7 547.3 238.4 Q540.7 205.7 537.5 179.0 Z" fill="#4aa61e"/>
<path d="M537.4 179.6 Q544.4 210.6 563.2 248.5 Q549.9 210.6 541.8 179.6 Z" fill="#2c8a10"/>
<path d="M539.6 181.6 Q547.6 210.6 563.2 244.5" stroke="#7cc22a" stroke-width="0.8" fill="none" opacity="0.8"/>
<path d="M540.8 180.2 Q544.7 211.2 560.8 249.2 Q550.7 211.2 545.8 180.2 Z" fill="#2a7f0e"/>
<path d="M545.4 180.8 Q552.4 214.7 569.3 256.1 Q556.8 214.7 548.7 180.8 Z" fill="#237508"/>
<path d="M548.9 181.4 Q551.9 216.7 564.7 259.8 Q556.7 216.7 552.7 181.4 Z" fill="#2a7f0e"/>
<path d="M550.8 183.4 Q554.8 216.7 564.7 255.8" stroke="#7cc22a" stroke-width="0.8" fill="none" opacity="0.8"/>
<path d="M552.6 182.1 Q555.7 213.4 568.8 251.6 Q560.6 213.4 556.4 182.1 Z" fill="#37981a"/>
<path d="M556.1 182.9 Q562.0 216.4 579.1 257.4 Q567.2 216.4 560.3 182.9 Z" fill="#3f9c18"/>
<path d="M559.4 183.6 Q567.7 219.1 589.3 262.4 Q573.9 219.1 564.5 183.6 Z" fill="#237508"/>
<path d="M561.9 185.6 Q571.3 219.1 589.3 258.4" stroke="#7cc22a" stroke-width="0.8" fill="none" opacity="0.8"/>
<path d="M563.1 184.4 Q567.9 221.5 585.1 266.8 Q573.9 221.5 568.2 184.4 Z" fill="#4aa61e"/>
<path d="M567.8 185.3 Q574.9 222.4 591.7 267.8 Q579.1 222.4 571.0 185.3 Z" fill="#4aa61e"/>
<path d="M570.9 186.1 Q578.6 222.9 598.1 267.7 Q584.0 222.9 575.3 186.1 Z" fill="#37981a"/>
<path d="M573.1 188.1 Q581.8 222.9 598.1 263.7" stroke="#7cc22a" stroke-width="0.8" fill="none" opacity="0.8"/>
<path d="M574.5 187.1 Q582.3 226.5 602.2 274.6 Q587.9 226.5 579.1 187.1 Z" fill="#2a7f0e"/>
<path d="M578.4 188.0 Q585.1 222.7 603.3 265.0 Q590.4 222.7 582.7 188.0 Z" fill="#3f9c18"/>
<path d="M580.6 190.0 Q588.2 222.7 603.3 261.0" stroke="#7cc22a" stroke-width="0.8" fill="none" opacity="0.8"/>
<path d="M582.4 189.0 Q589.0 225.1 606.1 269.2 Q593.8 225.1 586.2 189.0 Z" fill="#237508"/>
<path d="M584.3 191.0 Q591.9 225.1 606.1 265.2" stroke="#7cc22a" stroke-width="0.8" fill="none" opacity="0.8"/>
<path d="M586.0 190.0 Q594.9 226.4 615.0 270.8 Q599.8 226.4 590.0 190.0 Z" fill="#237508"/>
<path d="M588.0 192.0 Q597.9 226.4 615.0 266.8" stroke="#7cc22a" stroke-width="0.8" fill="none" opacity="0.8"/>
<path d="M566 181 L586 177" stroke="#d8f0c0" stroke-width="1" opacity="0.8"/>
<path d="M571 184 L586 181" stroke="#d8f0c0" stroke-width="1" opacity="0.8"/>
<path d="M576 187 L586 185" stroke="#d8f0c0" stroke-width="1" opacity="0.8"/>
<path d="M581 190 L586 189" stroke="#d8f0c0" stroke-width="1" opacity="0.8"/><linearGradient id="gfr" x1="300" y1="185" x2="380" y2="290" gradientUnits="userSpaceOnUse"><stop offset="0" stop-color="#a4d02c"/><stop offset="0.3" stop-color="#c4dc30"/><stop offset="0.6" stop-color="#dcd828"/><stop offset="1" stop-color="#ecd020"/></linearGradient>
<path d="M270.0 238.0 L271.5 235.0 L273.0 232.0 L274.5 229.0 L276.0 226.0 L278.5 223.0 L281.0 220.0 L283.5 217.0 L286.0 214.0 L289.5 211.0 L293.0 208.0 L296.5 205.0 L300.0 202.0 L304.5 199.8 L309.0 197.5 L313.5 195.2 L318.0 193.0 L323.5 191.5 L329.0 190.0 L334.5 188.5 L340.0 187.0 L346.2 185.8 L352.5 184.5 L358.8 183.2 L365.0 182.0 L371.2 181.2 L377.5 180.5 L383.8 179.8 L390.0 179.0 L395.5 179.8 L401.0 180.5 L406.5 181.2 L412.0 182.0 L417.0 183.8 L422.0 185.5 L427.0 187.2 L432.0 189.0 L436.2 191.2 L440.5 193.5 L444.8 195.8 L449.0 198.0 L453.1 202.1 L451.8 202.0 L450.6 202.0 L450.4 202.7 L448.7 202.3 L445.7 201.0 L444.1 200.9 L444.2 202.3 L445.6 204.8 L441.9 203.3 L441.0 204.0 L439.4 204.1 L437.9 205.4 L439.1 208.8 L437.7 210.2 L431.2 207.2 L433.8 212.1 L429.1 211.1 L423.7 210.0 L425.4 215.6 L421.6 215.9 L420.2 218.7 L417.4 220.1 L414.9 222.4 L412.0 224.3 L402.6 219.1 L403.4 225.1 L395.8 221.6 L396.9 228.7 L387.1 223.1 L384.5 226.2 L382.9 231.0 L378.2 231.5 L376.0 235.5 L371.5 235.9 L370.6 242.4 L361.8 235.1 L362.1 244.2 L354.5 238.1 L352.1 242.3 L351.8 251.4 L344.4 243.5 L342.9 250.4 L338.9 250.4 L334.5 248.7 L333.7 259.5 L331.6 266.3 L327.9 267.6 L325.7 274.7 L319.4 263.1 L317.0 269.2 L314.0 272.4 L312.7 285.1 L307.7 276.2 L306.1 288.4 L302.6 288.0 L299.1 284.5 L297.0 291.8 L294.9 299.9 L292.2 303.2 L290.1 312.0 L287.4 314.3 L283.9 305.5 L281.7 312.4 L279.4 317.3 L276.8 320.3 L273.8 313.0 Z" fill="url(#gfr)"/>
<path d="M268 236 Q284 212 312 198 Q296 220 292 250 Q290 290 284 340 L268 350 Z" fill="#6cae22" opacity="0.85"/>
<path d="M274.0 270.3 Q275.9 305.8 275.2 341.5 Q271.0 306.1 269.1 270.6 Z" fill="#a6d02e"/>
<path d="M276.2 271.4 Q278.6 312.0 278.8 352.8 Q274.1 312.3 271.6 271.7 Z" fill="#b8d832"/>
<path d="M278.3 268.2 Q281.1 309.0 281.6 349.9 Q276.6 309.3 273.8 268.5 Z" fill="#c8d830"/>
<path d="M279.9 264.3 Q282.9 304.3 284.2 344.4 Q279.3 304.6 276.3 264.6 Z" fill="#9ac82a"/>
<path d="M281.9 259.5 Q285.1 297.7 286.4 336.1 Q281.4 298.0 278.2 259.8 Z" fill="#b8d832"/>
<path d="M285.1 261.2 Q289.1 305.2 290.6 349.5 Q284.1 305.7 280.0 261.6 Z" fill="#b8d832"/>
<path d="M286.9 258.7 Q291.2 302.9 293.6 347.4 Q287.2 303.3 282.8 259.1 Z" fill="#c8d830"/>
<path d="M289.6 253.7 Q294.0 294.7 295.7 336.1 Q288.7 295.3 284.4 254.2 Z" fill="#a6d02e"/>
<path d="M291.2 251.1 Q295.7 291.6 298.5 332.3 Q292.2 292.0 287.6 251.5 Z" fill="#8cc42a"/>
<path d="M294.1 246.3 Q298.7 284.0 300.6 321.9 Q293.4 284.6 288.9 246.9 Z" fill="#a6d02e"/>
<path d="M296.1 242.0 Q300.6 277.1 302.7 312.6 Q295.7 277.8 291.2 242.6 Z" fill="#b8d832"/>
<path d="M298.2 242.2 Q303.4 280.2 306.7 318.3 Q299.7 280.7 294.6 242.7 Z" fill="#8cc42a"/>
<path d="M301.6 241.4 Q307.3 280.3 310.6 319.5 Q302.6 281.0 296.9 242.1 Z" fill="#9ac82a"/>
<path d="M303.9 235.3 Q309.3 269.0 312.0 303.2 Q304.0 269.9 298.7 236.1 Z" fill="#6aa820"/>
<path d="M307.3 238.0 Q313.9 276.9 317.9 316.2 Q308.8 277.7 302.2 238.9 Z" fill="#a6d02e"/>
<path d="M309.3 231.7 Q315.4 265.3 318.9 299.3 Q310.2 266.2 304.1 232.7 Z" fill="#c8d830"/>
<path d="M311.0 229.6 Q317.4 262.3 322.1 295.4 Q314.0 263.0 307.6 230.2 Z" fill="#b8d832"/>
<path d="M313.8 226.1 Q320.2 256.6 324.5 287.5 Q315.9 257.5 309.5 227.0 Z" fill="#b0d02c"/>
<path d="M318.0 230.2 Q326.3 266.8 332.3 303.9 Q321.7 267.9 313.4 231.3 Z" fill="#d8dc2a"/>
<path d="M319.8 226.7 Q328.1 260.4 334.5 294.5 Q324.4 261.3 316.2 227.6 Z" fill="#c0d82e"/>
<path d="M323.0 225.4 Q331.9 259.1 338.7 293.2 Q327.7 260.2 318.8 226.5 Z" fill="#b0d02c"/>
<path d="M325.5 221.8 Q334.3 252.7 340.8 284.2 Q329.6 254.0 320.8 223.2 Z" fill="#b0d02c"/>
<path d="M326.5 216.8 Q334.5 242.9 340.9 269.5 Q331.2 244.0 323.2 217.9 Z" fill="#e6d822"/>
<path d="M329.7 217.1 Q338.8 244.4 346.2 272.3 Q335.4 245.5 326.3 218.2 Z" fill="#e6d822"/>
<path d="M333.2 216.4 Q343.2 244.1 351.0 272.5 Q338.7 245.7 328.7 218.0 Z" fill="#c0d82e"/>
<path d="M334.8 213.2 Q344.4 237.8 352.1 263.2 Q340.5 239.4 330.8 214.7 Z" fill="#d8dc2a"/>
<path d="M339.1 216.0 Q351.3 244.9 361.6 274.5 Q347.5 246.5 335.3 217.6 Z" fill="#e6d822"/>
<path d="M340.7 211.6 Q352.0 236.4 361.2 262.1 Q347.8 238.3 336.5 213.6 Z" fill="#d8dc2a"/>
<path d="M343.4 209.3 Q354.7 232.3 363.5 256.5 Q349.8 234.6 338.6 211.6 Z" fill="#e8cc1c"/>
<path d="M347.9 211.5 Q361.5 237.8 373.0 265.1 Q357.2 240.0 343.6 213.8 Z" fill="#c0d82e"/>
<path d="M348.9 207.6 Q361.1 229.7 371.5 252.7 Q357.7 231.6 345.5 209.5 Z" fill="#e8cc1c"/>
<path d="M354.4 210.2 Q369.5 236.1 382.7 263.1 Q365.7 238.3 350.6 212.4 Z" fill="#e8cc1c"/>
<path d="M356.3 207.1 Q370.5 230.1 382.8 254.3 Q366.8 232.4 352.6 209.4 Z" fill="#d8dc2a"/>
<path d="M360.1 206.4 Q375.1 229.5 388.0 254.0 Q370.8 232.3 355.7 209.2 Z" fill="#e6d822"/>
<path d="M362.7 204.4 Q377.4 225.8 390.0 248.6 Q373.2 228.6 358.6 207.2 Z" fill="#e6d822"/>
<path d="M366.3 203.9 Q381.7 225.4 395.3 248.1 Q378.0 228.0 362.5 206.6 Z" fill="#b0d02c"/>
<path d="M368.6 201.7 Q383.3 221.0 396.2 241.8 Q379.8 223.7 365.1 204.3 Z" fill="#b0d02c"/>
<path d="M371.3 200.1 Q385.7 218.2 398.6 237.5 Q382.6 220.7 368.2 202.6 Z" fill="#ecd41e"/>
<path d="M377.4 201.9 Q395.1 223.0 411.1 245.6 Q391.6 225.9 373.9 204.8 Z" fill="#d8dc2a"/>
<path d="M378.9 198.5 Q394.5 216.4 408.3 235.9 Q390.8 219.6 375.2 201.7 Z" fill="#c0d82e"/>
<path d="M383.7 199.9 Q401.4 219.8 417.6 241.0 Q398.3 222.5 380.6 202.6 Z" fill="#d8dc2a"/>
<path d="M385.6 196.6 Q401.4 213.9 415.2 232.9 Q397.5 217.4 381.7 200.2 Z" fill="#c0d82e"/>
<path d="M390.9 198.9 Q409.7 218.9 427.0 240.3 Q406.8 221.6 388.1 201.6 Z" fill="#e6d822"/>
<path d="M394.3 197.5 Q412.9 216.9 429.8 237.9 Q409.5 220.2 391.0 200.8 Z" fill="#bcd430"/>
<path d="M397.1 196.4 Q415.3 214.9 431.9 234.9 Q412.2 217.9 394.1 199.4 Z" fill="#f0d420"/>
<path d="M400.4 195.6 Q418.3 213.4 434.6 233.0 Q414.9 216.9 396.9 199.0 Z" fill="#ecd820"/>
<path d="M402.4 194.8 Q419.4 211.3 435.2 229.1 Q416.9 214.0 399.9 197.5 Z" fill="#d8dc2c"/>
<path d="M406.1 194.5 Q423.4 210.8 439.3 228.7 Q420.5 213.9 403.2 197.5 Z" fill="#ecd820"/>
<path d="M407.0 192.4 Q421.9 206.1 435.6 221.0 Q419.5 208.6 404.7 195.0 Z" fill="#f0d420"/>
<path d="M411.7 192.3 Q427.6 206.4 441.8 222.4 Q424.3 210.1 408.4 196.0 Z" fill="#d8dc2c"/>
<path d="M415.5 192.7 Q432.2 207.2 447.2 223.6 Q428.8 211.1 412.2 196.6 Z" fill="#c8d830"/>
<path d="M415.7 191.6 Q429.6 203.5 442.3 216.7 Q427.3 206.3 413.4 194.4 Z" fill="#bcd430"/>
<path d="M420.8 192.5 Q436.3 205.6 450.2 220.7 Q432.9 209.6 417.4 196.6 Z" fill="#f0d420"/>
<path d="M422.8 192.6 Q437.6 204.7 450.9 218.5 Q434.8 208.1 420.0 196.0 Z" fill="#ecd820"/>
<path d="M424.2 191.4 Q436.8 201.5 448.0 213.5 Q433.9 205.1 421.3 195.0 Z" fill="#ecd820"/>
<path d="M426.3 191.5 Q438.2 200.8 448.9 211.6 Q435.9 203.8 424.0 194.5 Z" fill="#f0d420"/>
<path d="M428.8 192.1 Q440.0 200.8 450.0 211.0 Q437.6 203.8 426.5 195.1 Z" fill="#bcd430"/>
<path d="M431.3 191.9 Q441.4 199.8 449.9 209.5 Q438.3 203.7 428.3 195.8 Z" fill="#bcd430"/>
<path d="M434.6 193.3 Q445.0 201.3 453.9 211.3 Q442.1 205.1 431.7 197.1 Z" fill="#d8dc2c"/>
<path d="M435.9 192.8 Q444.1 199.1 450.7 207.4 Q441.0 203.0 432.9 196.7 Z" fill="#d8dc2c"/>
<path d="M437.4 193.2 Q444.1 198.2 449.4 205.0 Q441.5 201.6 434.9 196.5 Z" fill="#d8dc2c"/>
<path d="M439.9 194.0 Q445.8 198.4 450.4 204.6 Q443.3 201.8 437.3 197.3 Z" fill="#bcd430"/>
<path d="M442.8 195.6 Q448.6 200.0 453.4 205.8 Q446.4 203.0 440.6 198.7 Z" fill="#ecd820"/>
<path d="M445.3 196.7 Q450.5 200.4 454.6 205.7 Q448.3 203.6 443.1 199.9 Z" fill="#bcd430"/>
<path d="M447.2 197.2 Q451.0 199.8 453.6 204.0 Q448.7 203.1 444.9 200.6 Z" fill="#d8dc2c"/>
<path d="M449.4 198.2 Q452.3 200.0 454.1 203.4 Q450.2 203.3 447.4 201.5 Z" fill="#ecd820"/>
<path d="M451.6 199.1 Q453.6 200.1 454.7 202.9 Q451.8 203.7 449.8 202.7 Z" fill="#c8d830"/>
<path d="M278.1 284.2 L281.6 349.9 L276.1 284.3 Z" fill="#d8d428" opacity="0.95"/>
<path d="M280.7 282.7 L284.2 344.4 L278.3 282.8 Z" fill="#e4d020" opacity="0.95"/>
<path d="M282.4 275.2 L286.4 336.1 L280.2 275.4 Z" fill="#d8d428" opacity="0.95"/>
<path d="M285.7 283.0 L290.6 349.5 L283.3 283.2 Z" fill="#e4d020" opacity="0.95"/>
<path d="M287.7 277.6 L293.6 347.4 L285.7 277.8 Z" fill="#d8d428" opacity="0.95"/>
<path d="M300.3 263.2 L306.7 318.3 L298.2 263.4 Z" fill="#c8d830" opacity="0.95"/>
<path d="M302.3 255.8 L310.6 319.5 L300.4 256.0 Z" fill="#e4d020" opacity="0.95"/>
<path d="M303.2 240.7 L312.0 303.2 L301.1 241.0 Z" fill="#d8d428" opacity="0.95"/>
<path d="M308.8 255.5 L317.9 316.2 L306.6 255.9 Z" fill="#c8d830" opacity="0.95"/>
<path d="M310.6 248.3 L318.9 299.3 L308.7 248.6 Z" fill="#e4d020" opacity="0.95"/>
<path d="M313.1 243.2 L322.1 295.4 L310.8 243.7 Z" fill="#d8d428" opacity="0.95"/>
<path d="M315.9 241.7 L324.5 287.5 L313.9 242.1 Z" fill="#ecd020" opacity="0.95"/>
<path d="M323.0 258.1 L332.3 303.9 L320.8 258.6 Z" fill="#e8c41a" opacity="0.95"/>
<path d="M321.1 250.1 L332.3 303.9 L319.2 250.6 Z" fill="#c8d830" opacity="0.95"/>
<path d="M324.5 248.9 L334.5 294.5 L322.3 249.4 Z" fill="#f0c818" opacity="0.95"/>
<path d="M321.0 234.6 L334.5 294.5 L318.8 235.2 Z" fill="#c8d830" opacity="0.95"/>
<path d="M327.6 248.2 L338.7 293.2 L326.0 248.6 Z" fill="#e8c41a" opacity="0.95"/>
<path d="M329.5 240.4 L340.8 284.2 L327.2 241.0 Z" fill="#f0c818" opacity="0.95"/>
<path d="M334.7 234.1 L346.2 272.3 L332.5 234.8 Z" fill="#e8c41a" opacity="0.95"/>
<path d="M339.0 236.9 L351.0 272.5 L337.3 237.5 Z" fill="#f0c818" opacity="0.95"/>
<path d="M339.1 226.7 L352.1 263.2 L336.9 227.6 Z" fill="#ecd020" opacity="0.95"/>
<path d="M345.6 225.2 L361.2 262.1 L343.5 226.2 Z" fill="#f2d428" opacity="0.95"/>
<path d="M348.6 223.8 L363.5 256.5 L346.8 224.6 Z" fill="#f2d428" opacity="0.95"/>
<path d="M354.0 226.7 L373.0 265.1 L352.4 227.5 Z" fill="#f2d428" opacity="0.95"/>
<path d="M354.1 218.3 L371.5 252.7 L351.8 219.6 Z" fill="#ecd020" opacity="0.95"/>
<path d="M365.3 230.8 L382.7 263.1 L363.1 232.0 Z" fill="#e8c41a" opacity="0.95"/>
<path d="M364.3 222.6 L382.8 254.3 L362.9 223.5 Z" fill="#f2d428" opacity="0.95"/>
<path d="M366.6 219.6 L388.0 254.0 L365.2 220.5 Z" fill="#ecd020" opacity="0.95"/>
<path d="M369.7 217.2 L390.0 248.6 L368.0 218.4 Z" fill="#f0c818" opacity="0.95"/>
<path d="M372.9 215.0 L395.3 248.1 L370.9 216.4 Z" fill="#f2d428" opacity="0.95"/>
<path d="M374.2 211.2 L396.2 241.8 L372.8 212.2 Z" fill="#f2d428" opacity="0.95"/>
<path d="M388.5 216.8 L411.1 245.6 L386.7 218.4 Z" fill="#f2d428" opacity="0.95"/>
<path d="M394.8 214.2 L417.6 241.0 L393.5 215.3 Z" fill="#ecd020" opacity="0.95"/>
<path d="M394.6 208.8 L415.2 232.9 L393.0 210.2 Z" fill="#f2d428" opacity="0.95"/>
<path d="M404.7 215.0 L427.0 240.3 L403.2 216.4 Z" fill="#e8c41a" opacity="0.95"/>
<path d="M403.7 209.1 L429.8 237.9 L402.1 210.6 Z" fill="#f0c818" opacity="0.95"/>
<path d="M407.6 204.7 L434.6 233.0 L406.1 206.2 Z" fill="#ecd020" opacity="0.95"/>
<path d="M411.6 205.1 L435.2 229.1 L410.4 206.3 Z" fill="#f2d428" opacity="0.95"/>
<path d="M418.6 207.8 L439.3 228.7 L417.3 209.3 Z" fill="#f0c818" opacity="0.95"/>
<path d="M418.9 204.2 L435.6 221.0 L417.4 205.8 Z" fill="#f2d428" opacity="0.95"/>
<path d="M419.0 200.4 L441.8 222.4 L417.3 202.3 Z" fill="#f2d428" opacity="0.95"/>
<path d="M427.5 205.3 L447.2 223.6 L426.3 206.7 Z" fill="#f0c818" opacity="0.95"/>
<path d="M424.8 200.3 L442.3 216.7 L423.4 202.0 Z" fill="#ecd020" opacity="0.95"/>
<path d="M428.9 201.4 L450.2 220.7 L427.5 203.0 Z" fill="#f2d428" opacity="0.95"/>
<path d="M432.1 196.9 L448.9 211.6 L430.6 198.8 Z" fill="#f0c818" opacity="0.95"/>
<path d="M438.9 199.4 L449.9 209.5 L437.4 201.4 Z" fill="#e8c41a" opacity="0.95"/>
<path d="M439.9 199.0 L453.9 211.3 L438.5 200.7 Z" fill="#f0c818" opacity="0.95"/>
<path d="M440.7 198.5 L450.7 207.4 L439.6 199.9 Z" fill="#f2d428" opacity="0.95"/>
<path d="M300 250 Q312 226 340 214 Q372 205 408 210 Q386 219 364 227 Q336 235 316 254 Q306 264 300 266 Z" fill="#6e9c1e" opacity="0.78" filter="url(#blur1)"/>
<path d="M306 240 Q336 221 384 214" stroke="#86aa24" stroke-width="2.5" fill="none" opacity="0.7"/>
<path d="M302.0 249.0 L309.4 248.0 L313.0 266.0 Z" fill="#d8d82a" opacity="0.9"/>
<path d="M308.4 247.1 L315.8 246.1 L319.4 264.1 Z" fill="#e8cc1c" opacity="0.9"/>
<path d="M314.8 245.2 L322.2 244.2 L325.8 262.2 Z" fill="#c8d830" opacity="0.9"/>
<path d="M321.2 238.8 L328.6 237.8 L332.2 255.8 Z" fill="#d8d82a" opacity="0.9"/>
<path d="M327.6 236.9 L335.0 235.9 L338.6 253.9 Z" fill="#e8cc1c" opacity="0.9"/>
<path d="M334.0 235.0 L341.4 234.0 L345.0 252.0 Z" fill="#c8d830" opacity="0.9"/>
<path d="M340.4 228.6 L347.8 227.6 L351.4 245.6 Z" fill="#d8d82a" opacity="0.9"/>
<path d="M346.8 226.7 L354.2 225.7 L357.8 243.7 Z" fill="#e8cc1c" opacity="0.9"/>
<path d="M353.2 224.8 L360.6 223.8 L364.2 241.8 Z" fill="#c8d830" opacity="0.9"/>
<path d="M359.6 218.4 L367.0 217.4 L370.6 235.4 Z" fill="#d8d82a" opacity="0.9"/>
<path d="M366.0 216.5 L373.4 215.5 L377.0 233.5 Z" fill="#e8cc1c" opacity="0.9"/>
<path d="M372.4 214.6 L379.8 213.6 L383.4 231.6 Z" fill="#c8d830" opacity="0.9"/>
<path d="M378.8 208.2 L386.2 207.2 L389.8 225.2 Z" fill="#d8d82a" opacity="0.9"/>
<path d="M385.2 206.3 L392.6 205.3 L396.2 223.3 Z" fill="#e8cc1c" opacity="0.9"/>
<path d="M268 236 Q288 208 322 197 L320 201 Q306 218 297 246 Q291 270 284 318 L276 340 L268 340 Z" fill="#58a61e" opacity="0.85"/>
<path d="M272.0 232.0 Q275.0 272.0 270.0 302.0" stroke="#4c9a1c" stroke-width="2.6" fill="none" opacity="0.9"/>
<path d="M274.6 228.8 Q277.6 268.8 273.4 295.8" stroke="#8ec62a" stroke-width="2.6" fill="none" opacity="0.9"/>
<path d="M277.2 225.6 Q280.2 265.6 276.8 289.6" stroke="#62aa20" stroke-width="2.6" fill="none" opacity="0.9"/>
<path d="M279.8 222.4 Q282.8 262.4 280.2 283.4" stroke="#a4ce2e" stroke-width="2.6" fill="none" opacity="0.9"/>
<path d="M282.4 219.2 Q285.4 259.2 283.6 277.2" stroke="#4c9a1c" stroke-width="2.6" fill="none" opacity="0.9"/>
<path d="M285.0 216.0 Q288.0 256.0 287.0 271.0" stroke="#8ec62a" stroke-width="2.6" fill="none" opacity="0.9"/>
<path d="M287.6 212.8 Q290.6 252.8 290.4 264.8" stroke="#62aa20" stroke-width="2.6" fill="none" opacity="0.9"/>
<path d="M290.2 209.6 Q293.2 249.6 293.8 258.6" stroke="#a4ce2e" stroke-width="2.6" fill="none" opacity="0.9"/>
<path d="M292.8 206.4 Q295.8 246.4 297.2 252.4" stroke="#4c9a1c" stroke-width="2.6" fill="none" opacity="0.9"/>
<path d="M290 264 Q297 234 311 211 Q324 196 345 189 Q392 176 449 200" stroke="#e4ee80" stroke-width="1.5" fill="none" opacity="0.9"/>
<circle cx="342" cy="203" r="2.4" fill="#f6f48c" opacity="0.5"/>
<circle cx="376" cy="202" r="2.4" fill="#f6f48c" opacity="0.5"/>
<circle cx="418" cy="201" r="2.4" fill="#f6f48c" opacity="0.5"/>
<circle cx="287" cy="247" r="2.4" fill="#f6f48c" opacity="0.5"/>
<circle cx="357" cy="252" r="2.4" fill="#f6f48c" opacity="0.5"/>
<circle cx="404" cy="236" r="2.4" fill="#f6f48c" opacity="0.5"/>
<circle cx="306" cy="302" r="2.4" fill="#f6f48c" opacity="0.5"/></g></defs></svg>
<svg style="left:148px;top:176px;overflow:hidden" width="439" height="497" viewBox="148 176 439 497"><use href="#beach"/></svg>
<!-- sec_topbars -->
<div class="r" style="left:0px;top:3px;width:28px;height:17px;background:#4d4e52;"></div>
<div class="r" style="left:5px;top:0px;width:5px;height:2px;background:#7eaee0;"></div>
<div class="t" style="top:3.66px;font-size:16px;color:#79b0ea;font-weight:bold;left:4.60px;transform-origin:0 0;transform:scaleX(0.8482);">Ps</div>
<div class="r" style="left:30.5px;top:6px;width:33.5px;height:14px;background:#323232;"></div>
<div class="t" style="top:7.30px;font-size:9.8px;color:#e4e4e4;left:35.50px;transform-origin:0 0;transform:scaleX(0.9339);">Файл</div>
<div class="t" style="top:7.30px;font-size:9.8px;color:#e4e4e4;left:71.00px;transform-origin:0 0;transform:scaleX(0.9511);">Редактирование</div>
<div class="t" style="top:7.30px;font-size:9.8px;color:#e4e4e4;left:156.50px;transform-origin:0 0;transform:scaleX(0.9719);">Изображение</div>
<div class="t" style="top:7.30px;font-size:9.8px;color:#e4e4e4;left:231.50px;transform-origin:0 0;transform:scaleX(0.9232);">Слои</div>
<div class="t" style="top:7.30px;font-size:9.8px;color:#e4e4e4;left:267.00px;transform-origin:0 0;transform:scaleX(0.9728);">Текст</div>
<div class="t" style="top:7.30px;font-size:9.8px;color:#e4e4e4;left:303.50px;transform-origin:0 0;transform:scaleX(0.9436);">Выделение</div>
<div class="t" style="top:7.30px;font-size:9.8px;color:#e4e4e4;left:365.50px;transform-origin:0 0;transform:scaleX(0.9720);">Фильтр</div>
<div class="t" style="top:7.30px;font-size:9.8px;color:#e4e4e4;left:411.00px;transform-origin:0 0;transform:scaleX(1.0378);">3D</div>
<div class="t" style="top:7.30px;font-size:9.8px;color:#e4e4e4;left:436.50px;transform-origin:0 0;transform:scaleX(0.9943);">Просмотр</div>
<div class="t" style="top:7.30px;font-size:9.8px;color:#e4e4e4;left:495.00px;transform-origin:0 0;transform:scaleX(0.9880);">Окно</div>
<div class="t" style="top:7.30px;font-size:9.8px;color:#e4e4e4;left:531.00px;transform-origin:0 0;transform:scaleX(0.9235);">Справка</div>
<div class="r" style="left:922px;top:0px;width:78px;height:16px;background:#5b5b5b;"></div>
<div class="r" style="left:944px;top:0px;width:1px;height:16px;background:#4a4a4a;"></div>
<div class="r" style="left:966px;top:0px;width:1px;height:16px;background:#4a4a4a;"></div>
<div class="r" style="left:921px;top:0px;width:1px;height:16px;background:#4a4a4a;"></div>
<div class="r" style="left:928px;top:10.5px;width:9px;height:2px;background:#d8d8d8;"></div>
<svg style="left:949px;top:5px" width="12" height="9"><rect x="3.5" y="0.5" width="7" height="5" fill="none" stroke="#d8d8d8" stroke-width="1.2"/><rect x="0.6" y="3" width="7" height="5" fill="#5b5b5b" stroke="#d8d8d8" stroke-width="1.2"/></svg>
<svg style="left:979px;top:5px" width="10" height="8"><path d="M1 0.5 L8.5 7 M8.5 0.5 L1 7" stroke="#dcdcdc" stroke-width="1.5" fill="none"/></svg>
<svg style="left:15.4px;top:31.6px" width="16" height="12"><rect x="0.8" y="0.8" width="13.6" height="10" fill="none" stroke="#cccccc" stroke-width="1.4" stroke-dasharray="2.8 1.6"/></svg>
<div class="r" style="left:3px;top:27px;width:1px;height:20px;background:#484848;"></div>
<div class="r" style="left:5px;top:27px;width:1px;height:20px;background:#484848;"></div>
<div class="r" style="left:7px;top:27px;width:1px;height:20px;background:#484848;"></div>
<div class="t" style="top:32.17px;font-size:9.6px;color:#7a7a7a;left:276.00px;transform-origin:0 0;transform:scaleX(0.7843);">оживание</div>
<div class="r" style="left:320px;top:27px;width:1px;height:20px;background:#464646;"></div>
<div class="t" style="top:32.17px;font-size:9.6px;color:#d8d8d8;left:330.00px;transform-origin:0 0;transform:scaleX(0.8010);">Стиль:</div>
<div class="r" style="left:360px;top:30.5px;width:90px;height:13.5px;background:#424242;border-radius:2px;"></div>
<div class="t" style="top:32.17px;font-size:9.6px;color:#e6e6e6;left:365.00px;transform-origin:0 0;transform:scaleX(0.8249);">Обычный</div>
<svg style="left:441px;top:35.5px" width="6.5" height="4"><path d="M0.5 0.5 L3.25 3.5 L6.0 0.5" fill="none" stroke="#cfcfcf" stroke-width="1.2"/></svg>
<div class="t" style="top:32.17px;font-size:9.6px;color:#747474;left:459.50px;transform-origin:0 0;transform:scaleX(0.8859);">Шир.:</div>
<div class="r" style="left:482px;top:43px;width:29px;height:1px;background:#6a6a6a;"></div>
<svg style="left:522px;top:31px" width="11" height="11"><path d="M1 3 H9 M6.5 0.6 L9.4 3 L6.5 5.4 M10 8 H2 M4.5 5.6 L1.6 8 L4.5 10.4" fill="none" stroke="#8a8a8a" stroke-width="1.3"/></svg>
<div class="t" style="top:32.17px;font-size:9.6px;color:#747474;left:549.00px;transform-origin:0 0;transform:scaleX(0.8107);">Выс.:</div>
<div class="r" style="left:568px;top:43px;width:27px;height:1px;background:#6a6a6a;"></div>
<div class="r" style="left:602px;top:27px;width:1px;height:20px;background:#464646;"></div>
<div class="r" style="left:611px;top:31px;width:70px;height:12px;background:#474747;border-radius:2px;border:1px solid #5e5e5e;box-sizing:border-box;"></div>
<div class="t" style="top:32.37px;font-size:9.6px;color:#7e7e7e;left:621.00px;transform-origin:0 0;transform:scaleX(0.8587);">Уточн. край...</div>
<div class="r" style="left:848px;top:30.5px;width:152px;height:13.5px;background:#424242;border-radius:2px 0 0 2px;"></div>
<div class="t" style="top:32.17px;font-size:9.6px;color:#e6e6e6;left:853.60px;transform-origin:0 0;transform:scaleX(0.8055);">Основная рабочая среда</div>
<svg style="left:990.5px;top:35.5px" width="6.5" height="4"><path d="M0.5 0.5 L3.25 3.5 L6.0 0.5" fill="none" stroke="#cfcfcf" stroke-width="1.2"/></svg>
<div class="r" style="left:30px;top:51px;width:317px;height:22px;background:#424242;"></div>
<div class="r" style="left:347px;top:51px;width:193.5px;height:22px;background:#535353;"></div>
<div class="r" style="left:346px;top:51px;width:1px;height:22px;background:#383838;"></div>
<div class="r" style="left:540px;top:51px;width:1px;height:22px;background:#383838;"></div>
<div class="t" style="top:57.83px;font-size:10px;color:#a8a8a8;left:276.00px;transform-origin:0 0;transform:scaleX(0.9088);">7, RGB/8*) *</div>
<svg style="left:332px;top:59px" width="7" height="7"><path d="M0.7 0.7 L5.6 5.6 M5.6 0.7 L0.7 5.6" stroke="#c8c8c8" stroke-width="1.2"/></svg>
<div class="t" style="top:57.83px;font-size:10px;color:#f2f2f2;font-weight:bold;left:355.00px;transform-origin:0 0;transform:scaleX(0.8683);">Без имени-1 @ 16,7% (Слой 1, RGB/8) *</div>
<svg style="left:526px;top:59px" width="7" height="7"><path d="M0.7 0.7 L5.6 5.6 M5.6 0.7 L0.7 5.6" stroke="#d8d8d8" stroke-width="1.2"/></svg>
<div class="r" style="left:30px;top:73px;width:662px;height:13px;background:#4b4b4b;"></div>
<div class="r" style="left:30px;top:86px;width:15px;height:664px;background:#4b4b4b;"></div>
<div class="r" style="left:30px;top:72.5px;width:662px;height:1px;background:#3c3c3c;"></div>
<div class="r" style="left:44px;top:73px;width:1px;height:13px;background:#3c3c3c;"></div>
<svg style="left:0;top:0" width="1000" height="750"><path d="M49.7 81 V86" stroke="#636363" stroke-width="1"/><path d="M54.6 83.5 V86" stroke="#5f5f5f" stroke-width="1"/><path d="M59.5 83.5 V86" stroke="#5f5f5f" stroke-width="1"/><path d="M64.4 83.5 V86" stroke="#5f5f5f" stroke-width="1"/><path d="M69.3 73 V86" stroke="#676767" stroke-width="1"/><path d="M74.3 83.5 V86" stroke="#5f5f5f" stroke-width="1"/><path d="M79.2 83.5 V86" stroke="#5f5f5f" stroke-width="1"/><path d="M84.1 83.5 V86" stroke="#5f5f5f" stroke-width="1"/><path d="M89.0 81 V86" stroke="#636363" stroke-width="1"/><path d="M93.9 83.5 V86" stroke="#5f5f5f" stroke-width="1"/><path d="M98.8 83.5 V86" stroke="#5f5f5f" stroke-width="1"/><path d="M103.8 83.5 V86" stroke="#5f5f5f" stroke-width="1"/><path d="M108.7 73 V86" stroke="#676767" stroke-width="1"/><path d="M113.6 83.5 V86" stroke="#5f5f5f" stroke-width="1"/><path d="M118.5 83.5 V86" stroke="#5f5f5f" stroke-width="1"/><path d="M123.4 83.5 V86" stroke="#5f5f5f" stroke-width="1"/><path d="M128.3 81 V86" stroke="#636363" stroke-width="1"/><path d="M133.3 83.5 V86" stroke="#5f5f5f" stroke-width="1"/><path d="M138.2 83.5 V86" stroke="#5f5f5f" stroke-width="1"/><path d="M143.1 83.5 V86" stroke="#5f5f5f" stroke-width="1"/><path d="M148.0 73 V86" stroke="#676767" stroke-width="1"/><path d="M152.9 83.5 V86" stroke="#5f5f5f" stroke-width="1"/><path d="M157.8 83.5 V86" stroke="#5f5f5f" stroke-width="1"/><path d="M162.7 83.5 V86" stroke="#5f5f5f" stroke-width="1"/><path d="M167.7 81 V86" stroke="#636363" stroke-width="1"/><path d="M172.6 83.5 V86" stroke="#5f5f5f" stroke-width="1"/><path d="M177.5 83.5 V86" stroke="#5f5f5f" stroke-width="1"/><path d="M182.4 83.5 V86" stroke="#5f5f5f" stroke-width="1"/><path d="M187.3 73 V86" stroke="#676767" stroke-width="1"/><path d="M192.2 83.5 V86" stroke="#5f5f5f" stroke-width="1"/><path d="M197.2 83.5 V86" stroke="#5f5f5f" stroke-width="1"/><path d="M202.1 83.5 V86" stroke="#5f5f5f" stroke-width="1"/><path d="M207.0 81 V86" stroke="#636363" stroke-width="1"/><path d="M211.9 83.5 V86" stroke="#5f5f5f" stroke-width="1"/><path d="M216.8 83.5 V86" stroke="#5f5f5f" stroke-width="1"/><path d="M221.7 83.5 V86" stroke="#5f5f5f" stroke-width="1"/><path d="M226.7 73 V86" stroke="#676767" stroke-width="1"/><path d="M231.6 83.5 V86" stroke="#5f5f5f" stroke-width="1"/><path d="M236.5 83.5 V86" stroke="#5f5f5f" stroke-width="1"/><path d="M241.4 83.5 V86" stroke="#5f5f5f" stroke-width="1"/><path d="M246.3 81 V86" stroke="#636363" stroke-width="1"/><path d="M251.2 83.5 V86" stroke="#5f5f5f" stroke-width="1"/><path d="M256.2 83.5 V86" stroke="#5f5f5f" stroke-width="1"/><path d="M261.1 83.5 V86" stroke="#5f5f5f" stroke-width="1"/><path d="M266.0 73 V86" stroke="#676767" stroke-width="1"/><path d="M270.9 83.5 V86" stroke="#5f5f5f" stroke-width="1"/><path d="M275.8 83.5 V86" stroke="#5f5f5f" stroke-width="1"/><path d="M280.7 83.5 V86" stroke="#5f5f5f" stroke-width="1"/><path d="M285.7 81 V86" stroke="#636363" stroke-width="1"/><path d="M290.6 83.5 V86" stroke="#5f5f5f" stroke-width="1"/><path d="M295.5 83.5 V86" stroke="#5f5f5f" stroke-width="1"/><path d="M300.4 83.5 V86" stroke="#5f5f5f" stroke-width="1"/><path d="M305.3 73 V86" stroke="#676767" stroke-width="1"/><path d="M310.2 83.5 V86" stroke="#5f5f5f" stroke-width="1"/><path d="M315.2 83.5 V86" stroke="#5f5f5f" stroke-width="1"/><path d="M320.1 83.5 V86" stroke="#5f5f5f" stroke-width="1"/><path d="M325.0 81 V86" stroke="#636363" stroke-width="1"/><path d="M329.9 83.5 V86" stroke="#5f5f5f" stroke-width="1"/><path d="M334.8 83.5 V86" stroke="#5f5f5f" stroke-width="1"/><path d="M339.7 83.5 V86" stroke="#5f5f5f" stroke-width="1"/><path d="M344.6 73 V86" stroke="#676767" stroke-width="1"/><path d="M349.6 83.5 V86" stroke="#5f5f5f" stroke-width="1"/><path d="M354.5 83.5 V86" stroke="#5f5f5f" stroke-width="1"/><path d="M359.4 83.5 V86" stroke="#5f5f5f" stroke-width="1"/><path d="M364.3 81 V86" stroke="#636363" stroke-width="1"/><path d="M369.2 83.5 V86" stroke="#5f5f5f" stroke-width="1"/><path d="M374.1 83.5 V86" stroke="#5f5f5f" stroke-width="1"/><path d="M379.1 83.5 V86" stroke="#5f5f5f" stroke-width="1"/><path d="M384.0 73 V86" stroke="#676767" stroke-width="1"/><path d="M388.9 83.5 V86" stroke="#5f5f5f" stroke-width="1"/><path d="M393.8 83.5 V86" stroke="#5f5f5f" stroke-width="1"/><path d="M398.7 83.5 V86" stroke="#5f5f5f" stroke-width="1"/><path d="M403.6 81 V86" stroke="#636363" stroke-width="1"/><path d="M408.6 83.5 V86" stroke="#5f5f5f" stroke-width="1"/><path d="M413.5 83.5 V86" stroke="#5f5f5f" stroke-width="1"/><path d="M418.4 83.5 V86" stroke="#5f5f5f" stroke-width="1"/><path d="M423.3 73 V86" stroke="#676767" stroke-width="1"/><path d="M428.2 83.5 V86" stroke="#5f5f5f" stroke-width="1"/><path d="M433.1 83.5 V86" stroke="#5f5f5f" stroke-width="1"/><path d="M438.1 83.5 V86" stroke="#5f5f5f" stroke-width="1"/><path d="M443.0 81 V86" stroke="#636363" stroke-width="1"/><path d="M447.9 83.5 V86" stroke="#5f5f5f" stroke-width="1"/><path d="M452.8 83.5 V86" stroke="#5f5f5f" stroke-width="1"/><path d="M457.7 83.5 V86" stroke="#5f5f5f" stroke-width="1"/><path d="M462.6 73 V86" stroke="#676767" stroke-width="1"/><path d="M467.6 83.5 V86" stroke="#5f5f5f" stroke-width="1"/><path d="M472.5 83.5 V86" stroke="#5f5f5f" stroke-width="1"/><path d="M477.4 83.5 V86" stroke="#5f5f5f" stroke-width="1"/><path d="M482.3 81 V86" stroke="#636363" stroke-width="1"/><path d="M487.2 83.5 V86" stroke="#5f5f5f" stroke-width="1"/><path d="M492.1 83.5 V86" stroke="#5f5f5f" stroke-width="1"/><path d="M497.1 83.5 V86" stroke="#5f5f5f" stroke-width="1"/><path d="M502.0 73 V86" stroke="#676767" stroke-width="1"/><path d="M506.9 83.5 V86" stroke="#5f5f5f" stroke-width="1"/><path d="M511.8 83.5 V86" stroke="#5f5f5f" stroke-width="1"/><path d="M516.7 83.5 V86" stroke="#5f5f5f" stroke-width="1"/><path d="M521.6 81 V86" stroke="#636363" stroke-width="1"/><path d="M526.6 83.5 V86" stroke="#5f5f5f" stroke-width="1"/><path d="M531.5 83.5 V86" stroke="#5f5f5f" stroke-width="1"/><path d="M536.4 83.5 V86" stroke="#5f5f5f" stroke-width="1"/><path d="M541.3 73 V86" stroke="#676767" stroke-width="1"/><path d="M546.2 83.5 V86" stroke="#5f5f5f" stroke-width="1"/><path d="M551.1 83.5 V86" stroke="#5f5f5f" stroke-width="1"/><path d="M556.0 83.5 V86" stroke="#5f5f5f" stroke-width="1"/><path d="M561.0 81 V86" stroke="#636363" stroke-width="1"/><path d="M565.9 83.5 V86" stroke="#5f5f5f" stroke-width="1"/><path d="M570.8 83.5 V86" stroke="#5f5f5f" stroke-width="1"/><path d="M575.7 83.5 V86" stroke="#5f5f5f" stroke-width="1"/><path d="M580.6 73 V86" stroke="#676767" stroke-width="1"/><path d="M585.5 83.5 V86" stroke="#5f5f5f" stroke-width="1"/><path d="M590.5 83.5 V86" stroke="#5f5f5f" stroke-width="1"/><path d="M595.4 83.5 V86" stroke="#5f5f5f" stroke-width="1"/><path d="M600.3 81 V86" stroke="#636363" stroke-width="1"/><path d="M605.2 83.5 V86" stroke="#5f5f5f" stroke-width="1"/><path d="M610.1 83.5 V86" stroke="#5f5f5f" stroke-width="1"/><path d="M615.0 83.5 V86" stroke="#5f5f5f" stroke-width="1"/><path d="M620.0 73 V86" stroke="#676767" stroke-width="1"/><path d="M624.9 83.5 V86" stroke="#5f5f5f" stroke-width="1"/><path d="M629.8 83.5 V86" stroke="#5f5f5f" stroke-width="1"/><path d="M634.7 83.5 V86" stroke="#5f5f5f" stroke-width="1"/><path d="M639.6 81 V86" stroke="#636363" stroke-width="1"/><path d="M644.5 83.5 V86" stroke="#5f5f5f" stroke-width="1"/><path d="M649.5 83.5 V86" stroke="#5f5f5f" stroke-width="1"/><path d="M654.4 83.5 V86" stroke="#5f5f5f" stroke-width="1"/><path d="M659.3 73 V86" stroke="#676767" stroke-width="1"/><path d="M664.2 83.5 V86" stroke="#5f5f5f" stroke-width="1"/><path d="M669.1 83.5 V86" stroke="#5f5f5f" stroke-width="1"/><path d="M674.0 83.5 V86" stroke="#5f5f5f" stroke-width="1"/><path d="M679.0 81 V86" stroke="#636363" stroke-width="1"/><path d="M683.9 83.5 V86" stroke="#5f5f5f" stroke-width="1"/><path d="M688.8 83.5 V86" stroke="#5f5f5f" stroke-width="1"/><path d="M42.5 87.5 H45" stroke="#5f5f5f" stroke-width="1"/><path d="M42.5 92.4 H45" stroke="#5f5f5f" stroke-width="1"/><path d="M31 97.3 H45" stroke="#676767" stroke-width="1"/><path d="M42.5 102.3 H45" stroke="#5f5f5f" stroke-width="1"/><path d="M42.5 107.2 H45" stroke="#5f5f5f" stroke-width="1"/><path d="M42.5 112.1 H45" stroke="#5f5f5f" stroke-width="1"/><path d="M40 117.0 H45" stroke="#636363" stroke-width="1"/><path d="M42.5 121.9 H45" stroke="#5f5f5f" stroke-width="1"/><path d="M42.5 126.8 H45" stroke="#5f5f5f" stroke-width="1"/><path d="M42.5 131.8 H45" stroke="#5f5f5f" stroke-width="1"/><path d="M31 136.7 H45" stroke="#676767" stroke-width="1"/><path d="M42.5 141.6 H45" stroke="#5f5f5f" stroke-width="1"/><path d="M42.5 146.5 H45" stroke="#5f5f5f" stroke-width="1"/><path d="M42.5 151.4 H45" stroke="#5f5f5f" stroke-width="1"/><path d="M40 156.3 H45" stroke="#636363" stroke-width="1"/><path d="M42.5 161.3 H45" stroke="#5f5f5f" stroke-width="1"/><path d="M42.5 166.2 H45" stroke="#5f5f5f" stroke-width="1"/><path d="M42.5 171.1 H45" stroke="#5f5f5f" stroke-width="1"/><path d="M31 176.0 H45" stroke="#676767" stroke-width="1"/><path d="M42.5 180.9 H45" stroke="#5f5f5f" stroke-width="1"/><path d="M42.5 185.8 H45" stroke="#5f5f5f" stroke-width="1"/><path d="M42.5 190.7 H45" stroke="#5f5f5f" stroke-width="1"/><path d="M40 195.7 H45" stroke="#636363" stroke-width="1"/><path d="M42.5 200.6 H45" stroke="#5f5f5f" stroke-width="1"/><path d="M42.5 205.5 H45" stroke="#5f5f5f" stroke-width="1"/><path d="M42.5 210.4 H45" stroke="#5f5f5f" stroke-width="1"/><path d="M31 215.3 H45" stroke="#676767" stroke-width="1"/><path d="M42.5 220.2 H45" stroke="#5f5f5f" stroke-width="1"/><path d="M42.5 225.2 H45" stroke="#5f5f5f" stroke-width="1"/><path d="M42.5 230.1 H45" stroke="#5f5f5f" stroke-width="1"/><path d="M40 235.0 H45" stroke="#636363" stroke-width="1"/><path d="M42.5 239.9 H45" stroke="#5f5f5f" stroke-width="1"/><path d="M42.5 244.8 H45" stroke="#5f5f5f" stroke-width="1"/><path d="M42.5 249.7 H45" stroke="#5f5f5f" stroke-width="1"/><path d="M31 254.7 H45" stroke="#676767" stroke-width="1"/><path d="M42.5 259.6 H45" stroke="#5f5f5f" stroke-width="1"/><path d="M42.5 264.5 H45" stroke="#5f5f5f" stroke-width="1"/><path d="M42.5 269.4 H45" stroke="#5f5f5f" stroke-width="1"/><path d="M40 274.3 H45" stroke="#636363" stroke-width="1"/><path d="M42.5 279.2 H45" stroke="#5f5f5f" stroke-width="1"/><path d="M42.5 284.2 H45" stroke="#5f5f5f" stroke-width="1"/><path d="M42.5 289.1 H45" stroke="#5f5f5f" stroke-width="1"/><path d="M31 294.0 H45" stroke="#676767" stroke-width="1"/><path d="M42.5 298.9 H45" stroke="#5f5f5f" stroke-width="1"/><path d="M42.5 303.8 H45" stroke="#5f5f5f" stroke-width="1"/><path d="M42.5 308.7 H45" stroke="#5f5f5f" stroke-width="1"/><path d="M40 313.7 H45" stroke="#636363" stroke-width="1"/><path d="M42.5 318.6 H45" stroke="#5f5f5f" stroke-width="1"/><path d="M42.5 323.5 H45" stroke="#5f5f5f" stroke-width="1"/><path d="M42.5 328.4 H45" stroke="#5f5f5f" stroke-width="1"/><path d="M31 333.3 H45" stroke="#676767" stroke-width="1"/><path d="M42.5 338.2 H45" stroke="#5f5f5f" stroke-width="1"/><path d="M42.5 343.2 H45" stroke="#5f5f5f" stroke-width="1"/><path d="M42.5 348.1 H45" stroke="#5f5f5f" stroke-width="1"/><path d="M40 353.0 H45" stroke="#636363" stroke-width="1"/><path d="M42.5 357.9 H45" stroke="#5f5f5f" stroke-width="1"/><path d="M42.5 362.8 H45" stroke="#5f5f5f" stroke-width="1"/><path d="M42.5 367.7 H45" stroke="#5f5f5f" stroke-width="1"/><path d="M31 372.6 H45" stroke="#676767" stroke-width="1"/><path d="M42.5 377.6 H45" stroke="#5f5f5f" stroke-width="1"/><path d="M42.5 382.5 H45" stroke="#5f5f5f" stroke-width="1"/><path d="M42.5 387.4 H45" stroke="#5f5f5f" stroke-width="1"/><path d="M40 392.3 H45" stroke="#636363" stroke-width="1"/><path d="M42.5 397.2 H45" stroke="#5f5f5f" stroke-width="1"/><path d="M42.5 402.1 H45" stroke="#5f5f5f" stroke-width="1"/><path d="M42.5 407.1 H45" stroke="#5f5f5f" stroke-width="1"/><path d="M31 412.0 H45" stroke="#676767" stroke-width="1"/><path d="M42.5 416.9 H45" stroke="#5f5f5f" stroke-width="1"/><path d="M42.5 421.8 H45" stroke="#5f5f5f" stroke-width="1"/><path d="M42.5 426.7 H45" stroke="#5f5f5f" stroke-width="1"/><path d="M40 431.6 H45" stroke="#636363" stroke-width="1"/><path d="M42.5 436.6 H45" stroke="#5f5f5f" stroke-width="1"/><path d="M42.5 441.5 H45" stroke="#5f5f5f" stroke-width="1"/><path d="M42.5 446.4 H45" stroke="#5f5f5f" stroke-width="1"/><path d="M31 451.3 H45" stroke="#676767" stroke-width="1"/><path d="M42.5 456.2 H45" stroke="#5f5f5f" stroke-width="1"/><path d="M42.5 461.1 H45" stroke="#5f5f5f" stroke-width="1"/><path d="M42.5 466.1 H45" stroke="#5f5f5f" stroke-width="1"/><path d="M40 471.0 H45" stroke="#636363" stroke-width="1"/><path d="M42.5 475.9 H45" stroke="#5f5f5f" stroke-width="1"/><path d="M42.5 480.8 H45" stroke="#5f5f5f" stroke-width="1"/><path d="M42.5 485.7 H45" stroke="#5f5f5f" stroke-width="1"/><path d="M31 490.6 H45" stroke="#676767" stroke-width="1"/><path d="M42.5 495.6 H45" stroke="#5f5f5f" stroke-width="1"/><path d="M42.5 500.5 H45" stroke="#5f5f5f" stroke-width="1"/><path d="M42.5 505.4 H45" stroke="#5f5f5f" stroke-width="1"/><path d="M40 510.3 H45" stroke="#636363" stroke-width="1"/><path d="M42.5 515.2 H45" stroke="#5f5f5f" stroke-width="1"/><path d="M42.5 520.1 H45" stroke="#5f5f5f" stroke-width="1"/><path d="M42.5 525.1 H45" stroke="#5f5f5f" stroke-width="1"/><path d="M31 530.0 H45" stroke="#676767" stroke-width="1"/><path d="M42.5 534.9 H45" stroke="#5f5f5f" stroke-width="1"/><path d="M42.5 539.8 H45" stroke="#5f5f5f" stroke-width="1"/><path d="M42.5 544.7 H45" stroke="#5f5f5f" stroke-width="1"/><path d="M40 549.6 H45" stroke="#636363" stroke-width="1"/><path d="M42.5 554.6 H45" stroke="#5f5f5f" stroke-width="1"/><path d="M42.5 559.5 H45" stroke="#5f5f5f" stroke-width="1"/><path d="M42.5 564.4 H45" stroke="#5f5f5f" stroke-width="1"/><path d="M31 569.3 H45" stroke="#676767" stroke-width="1"/><path d="M42.5 574.2 H45" stroke="#5f5f5f" stroke-width="1"/><path d="M42.5 579.1 H45" stroke="#5f5f5f" stroke-width="1"/><path d="M42.5 584.0 H45" stroke="#5f5f5f" stroke-width="1"/><path d="M40 589.0 H45" stroke="#636363" stroke-width="1"/><path d="M42.5 593.9 H45" stroke="#5f5f5f" stroke-width="1"/><path d="M42.5 598.8 H45" stroke="#5f5f5f" stroke-width="1"/><path d="M42.5 603.7 H45" stroke="#5f5f5f" stroke-width="1"/><path d="M31 608.6 H45" stroke="#676767" stroke-width="1"/><path d="M42.5 613.5 H45" stroke="#5f5f5f" stroke-width="1"/><path d="M42.5 618.5 H45" stroke="#5f5f5f" stroke-width="1"/><path d="M42.5 623.4 H45" stroke="#5f5f5f" stroke-width="1"/><path d="M40 628.3 H45" stroke="#636363" stroke-width="1"/><path d="M42.5 633.2 H45" stroke="#5f5f5f" stroke-width="1"/><path d="M42.5 638.1 H45" stroke="#5f5f5f" stroke-width="1"/><path d="M42.5 643.0 H45" stroke="#5f5f5f" stroke-width="1"/><path d="M31 648.0 H45" stroke="#676767" stroke-width="1"/><path d="M42.5 652.9 H45" stroke="#5f5f5f" stroke-width="1"/><path d="M42.5 657.8 H45" stroke="#5f5f5f" stroke-width="1"/><path d="M42.5 662.7 H45" stroke="#5f5f5f" stroke-width="1"/><path d="M40 667.6 H45" stroke="#636363" stroke-width="1"/><path d="M42.5 672.5 H45" stroke="#5f5f5f" stroke-width="1"/><path d="M42.5 677.5 H45" stroke="#5f5f5f" stroke-width="1"/><path d="M42.5 682.4 H45" stroke="#5f5f5f" stroke-width="1"/><path d="M31 687.3 H45" stroke="#676767" stroke-width="1"/><path d="M42.5 692.2 H45" stroke="#5f5f5f" stroke-width="1"/><path d="M42.5 697.1 H45" stroke="#5f5f5f" stroke-width="1"/><path d="M42.5 702.0 H45" stroke="#5f5f5f" stroke-width="1"/><path d="M40 707.0 H45" stroke="#636363" stroke-width="1"/><path d="M42.5 711.9 H45" stroke="#5f5f5f" stroke-width="1"/><path d="M42.5 716.8 H45" stroke="#5f5f5f" stroke-width="1"/><path d="M42.5 721.7 H45" stroke="#5f5f5f" stroke-width="1"/><path d="M31 726.6 H45" stroke="#676767" stroke-width="1"/><path d="M42.5 731.5 H45" stroke="#5f5f5f" stroke-width="1"/><path d="M42.5 736.5 H45" stroke="#5f5f5f" stroke-width="1"/><path d="M42.5 741.4 H45" stroke="#5f5f5f" stroke-width="1"/><path d="M40 746.3 H45" stroke="#636363" stroke-width="1"/></svg>
<div class="t" style="top:76.53px;font-size:8px;color:#b4b4b4;left:307.82px;transform-origin:0 0;">8</div>
<div class="t" style="top:76.53px;font-size:8px;color:#b4b4b4;left:347.15px;transform-origin:0 0;">10</div>
<div class="t" style="top:76.53px;font-size:8px;color:#b4b4b4;left:386.48px;transform-origin:0 0;">12</div>
<div class="t" style="top:76.53px;font-size:8px;color:#b4b4b4;left:425.81px;transform-origin:0 0;">14</div>
<div class="t" style="top:76.53px;font-size:8px;color:#b4b4b4;left:465.14px;transform-origin:0 0;">16</div>
<div class="t" style="top:76.53px;font-size:8px;color:#b4b4b4;left:504.47px;transform-origin:0 0;">18</div>
<div class="t" style="top:76.53px;font-size:8px;color:#b4b4b4;left:543.80px;transform-origin:0 0;">20</div>
<div class="t" style="top:76.53px;font-size:8px;color:#b4b4b4;left:583.13px;transform-origin:0 0;">22</div>
<div class="t" style="top:76.53px;font-size:8px;color:#b4b4b4;left:622.46px;transform-origin:0 0;">24</div>
<div class="t" style="top:76.53px;font-size:8px;color:#b4b4b4;left:661.79px;transform-origin:0 0;">26</div>
<div class="t" style="top:454.54px;font-size:8px;color:#b4b4b4;left:33.50px;transform-origin:0 0;">1</div>
<div class="t" style="top:463.04px;font-size:8px;color:#b4b4b4;left:33.50px;transform-origin:0 0;">4</div>
<div class="t" style="top:493.87px;font-size:8px;color:#b4b4b4;left:33.50px;transform-origin:0 0;">1</div>
<div class="t" style="top:502.37px;font-size:8px;color:#b4b4b4;left:33.50px;transform-origin:0 0;">6</div>
<div class="t" style="top:533.20px;font-size:8px;color:#b4b4b4;left:33.50px;transform-origin:0 0;">1</div>
<div class="t" style="top:541.70px;font-size:8px;color:#b4b4b4;left:33.50px;transform-origin:0 0;">8</div>
<div class="t" style="top:572.53px;font-size:8px;color:#b4b4b4;left:33.50px;transform-origin:0 0;">2</div>
<div class="t" style="top:581.03px;font-size:8px;color:#b4b4b4;left:33.50px;transform-origin:0 0;">0</div>
<div class="t" style="top:611.86px;font-size:8px;color:#b4b4b4;left:33.50px;transform-origin:0 0;">2</div>
<div class="t" style="top:620.36px;font-size:8px;color:#b4b4b4;left:33.50px;transform-origin:0 0;">2</div>
<div class="t" style="top:651.19px;font-size:8px;color:#b4b4b4;left:33.50px;transform-origin:0 0;">2</div>
<div class="t" style="top:659.69px;font-size:8px;color:#b4b4b4;left:33.50px;transform-origin:0 0;">4</div>
<div class="t" style="top:690.52px;font-size:8px;color:#b4b4b4;left:33.50px;transform-origin:0 0;">2</div>
<div class="t" style="top:699.02px;font-size:8px;color:#b4b4b4;left:33.50px;transform-origin:0 0;">6</div>
<div class="t" style="top:729.85px;font-size:8px;color:#b4b4b4;left:33.50px;transform-origin:0 0;">2</div>
<div class="t" style="top:738.35px;font-size:8px;color:#b4b4b4;left:33.50px;transform-origin:0 0;">8</div>
<!-- sec_toolbar -->
<div class="r" style="left:0px;top:51px;width:27.5px;height:699px;background:#555555;"></div>
<div class="r" style="left:0px;top:50px;width:27.5px;height:10.5px;background:#3e3e3e;"></div>
<svg style="left:2.6px;top:53.4px" width="8" height="6"><path d="M0.6 0.4 L2.6 2.4 L0.6 4.4 M3.6 0.4 L5.6 2.4 L3.6 4.4" fill="none" stroke="#e2e2e2" stroke-width="1.3"/></svg>
<div class="r" style="left:27.5px;top:51px;width:3px;height:699px;background:#434343;"></div>
<div class="r" style="left:2px;top:95px;width:24px;height:17.5px;background:#373737;border-radius:2px;"></div>
<svg style="left:5.8px;top:76.5px" width="14.8" height="14.8" viewBox="0 0 16 16"><path d="M8 1.2 L10.3 4 H8.7 V7.3 H12 V5.7 L14.8 8 L12 10.3 V8.7 H8.7 V12 H10.3 L8 14.8 L5.7 12 H7.3 V8.7 H4 V10.3 L1.2 8 L4 5.7 V7.3 H7.3 V4 H5.7 Z" fill="#d2d2d2"/></svg><svg style="left:21px;top:87.9px" width="3" height="3"><path d="M3 0 V3 H0 Z" fill="#a8a8a8"/></svg>
<svg style="left:5.8px;top:96.9px" width="14.8" height="14.8" viewBox="0 0 16 16"><rect x="1.8" y="3" width="12.4" height="9.6" fill="none" stroke="#d2d2d2" stroke-width="1.4" stroke-dasharray="2.8 1.5"/></svg><svg style="left:21px;top:108.3px" width="3" height="3"><path d="M3 0 V3 H0 Z" fill="#a8a8a8"/></svg>
<svg style="left:5.8px;top:117.3px" width="14.8" height="14.8" viewBox="0 0 16 16"><path d="M1.8 3.2 L7.2 6 L13.6 1.8 L12.8 9.2 L7.6 10.4 Z" fill="none" stroke="#d2d2d2" stroke-width="1.3" stroke-linejoin="round"/><path d="M7.6 10.4 L4.6 13.8 M7.6 10.4 L3.4 11.6" stroke="#d2d2d2" stroke-width="1.2"/></svg><svg style="left:21px;top:128.7px" width="3" height="3"><path d="M3 0 V3 H0 Z" fill="#a8a8a8"/></svg>
<svg style="left:5.8px;top:137.7px" width="14.8" height="14.8" viewBox="0 0 16 16"><path d="M2.6 13.4 L9.2 6.8" stroke="#d2d2d2" stroke-width="2.6" stroke-linecap="round"/><path d="M11.3 2 V4.4 M10.1 3.2 H12.5 M13.4 6.2 V7.8 M12.6 7 H14.2 M7 2.4 V3.8 M6.3 3.1 H7.7" stroke="#d2d2d2" stroke-width="1"/></svg><svg style="left:21px;top:149.1px" width="3" height="3"><path d="M3 0 V3 H0 Z" fill="#a8a8a8"/></svg>
<svg style="left:5.8px;top:156.8px" width="14.8" height="14.8" viewBox="0 0 16 16"><path d="M4.4 1 V11.6 H15 M1 4.4 H11.6 V15" fill="none" stroke="#d2d2d2" stroke-width="1.6"/></svg><svg style="left:21px;top:168.2px" width="3" height="3"><path d="M3 0 V3 H0 Z" fill="#a8a8a8"/></svg>
<svg style="left:5.8px;top:178.5px" width="14.8" height="14.8" viewBox="0 0 16 16"><path d="M2.2 13.8 L3 11.4 L8.8 5.6 L10.4 7.2 L4.6 13 Z" fill="none" stroke="#d2d2d2" stroke-width="1.2" stroke-linejoin="round"/><path d="M8.2 4.4 L11.6 7.8" stroke="#d2d2d2" stroke-width="1.8" stroke-linecap="round"/><path d="M10.2 5.8 L12.6 3.4" stroke="#d2d2d2" stroke-width="3" stroke-linecap="round"/></svg><svg style="left:21px;top:189.9px" width="3" height="3"><path d="M3 0 V3 H0 Z" fill="#a8a8a8"/></svg>
<svg style="left:5.8px;top:198.9px" width="14.8" height="14.8" viewBox="0 0 16 16"><g transform="rotate(-40 8 8.5)"><rect x="1" y="5.6" width="14" height="6" rx="1.6" fill="#d2d2d2"/><rect x="5.4" y="6.4" width="5.2" height="4.4" fill="#535353"/><path d="M6.4 7.6h1v1h-1z M8.6 7.6h1v1h-1z M7.5 8.7h1v1h-1z M6.4 9.5h1v.8h-1z M8.6 9.5h1v.8h-1z" fill="#d2d2d2"/></g><path d="M2 6.4 A4.2 4.2 0 0 1 8.4 2.6" fill="none" stroke="#d2d2d2" stroke-width="0.9" stroke-dasharray="1.3 1.1"/></svg><svg style="left:21px;top:210.3px" width="3" height="3"><path d="M3 0 V3 H0 Z" fill="#a8a8a8"/></svg>
<svg style="left:5.8px;top:219.3px" width="14.8" height="14.8" viewBox="0 0 16 16"><path d="M13.6 1.6 L14.6 2.6 L8.2 10.2 L6.4 8.4 Z" fill="#d2d2d2"/><path d="M5.6 9.2 L7.6 11.2 C7 13.4 4.4 14.4 1.8 14 C3.4 13 3.2 10 5.6 9.2 Z" fill="#d2d2d2"/></svg><svg style="left:21px;top:230.7px" width="3" height="3"><path d="M3 0 V3 H0 Z" fill="#a8a8a8"/></svg>
<svg style="left:5.8px;top:239.7px" width="14.8" height="14.8" viewBox="0 0 16 16"><path d="M8 1.4 A2.7 2.7 0 0 1 9.6 6.4 L9.8 8.8 H13.2 V11.2 H2.8 V8.8 H6.2 L6.4 6.4 A2.7 2.7 0 0 1 8 1.4 Z" fill="#d2d2d2"/><rect x="2.8" y="12.4" width="10.4" height="1.6" fill="#d2d2d2"/></svg><svg style="left:21px;top:251.1px" width="3" height="3"><path d="M3 0 V3 H0 Z" fill="#a8a8a8"/></svg>
<svg style="left:5.8px;top:260.1px" width="14.8" height="14.8" viewBox="0 0 16 16"><path d="M13.8 1.8 L14.8 2.8 L9 9.8 L7.4 8.2 Z" fill="#d2d2d2"/><path d="M6.6 9 L8.4 10.8 C7.8 13 5.6 14.2 3.2 13.8 C4.6 12.8 4.4 9.8 6.6 9 Z" fill="#d2d2d2"/><path d="M1 5.2 L4.6 3 V4.4 C7 4 8.6 4.8 9.6 6" fill="none" stroke="#d2d2d2" stroke-width="1"/><path d="M1 5.2 L4.6 3 V7.2 Z" fill="#d2d2d2"/></svg><svg style="left:21px;top:271.5px" width="3" height="3"><path d="M3 0 V3 H0 Z" fill="#a8a8a8"/></svg>
<svg style="left:5.8px;top:280.5px" width="14.8" height="14.8" viewBox="0 0 16 16"><path d="M9.6 2 L14.2 6 L9 12 L4.4 8 Z" fill="#d2d2d2"/><path d="M4 8.6 L8.4 12.6 L7 13.6 H3.6 L1.6 11.6 Z" fill="none" stroke="#d2d2d2" stroke-width="1.2" stroke-linejoin="round"/><path d="M7 13.6 H13.6" stroke="#d2d2d2" stroke-width="1.2"/></svg><svg style="left:21px;top:291.9px" width="3" height="3"><path d="M3 0 V3 H0 Z" fill="#a8a8a8"/></svg>
<svg style="left:5.8px;top:300.9px" width="14.8" height="14.8" viewBox="0 0 16 16"><path d="M6.4 3.2 L12.2 9 L7.2 14 L1.4 8.2 Z" fill="none" stroke="#d2d2d2" stroke-width="1.4" stroke-linejoin="round"/><path d="M6.8 7 V1.6 C6.8 0.4 4.4 0.4 4.4 1.8 V5" fill="none" stroke="#d2d2d2" stroke-width="1.1"/><path d="M13.4 9.2 C14.6 11 15 11.8 15 12.6 A1.6 1.6 0 0 1 11.8 12.6 C11.8 11.8 12.4 10.8 13.4 9.2 Z" fill="#d2d2d2"/><circle cx="6.8" cy="7.2" r="1" fill="#d2d2d2"/></svg><svg style="left:21px;top:312.3px" width="3" height="3"><path d="M3 0 V3 H0 Z" fill="#a8a8a8"/></svg>
<svg style="left:5.8px;top:321.3px" width="14.8" height="14.8" viewBox="0 0 16 16"><path d="M8 1.6 C9.4 4.6 12.2 7.2 12.2 10.2 A4.2 4.2 0 0 1 3.8 10.2 C3.8 7.2 6.6 4.6 8 1.6 Z" fill="#d2d2d2"/></svg><svg style="left:21px;top:332.7px" width="3" height="3"><path d="M3 0 V3 H0 Z" fill="#a8a8a8"/></svg>
<svg style="left:5.8px;top:341.7px" width="14.8" height="14.8" viewBox="0 0 16 16"><circle cx="9.8" cy="6" r="4.4" fill="#d2d2d2"/><path d="M6.6 9.2 L1.8 14" stroke="#d2d2d2" stroke-width="1.8" stroke-linecap="round"/></svg><svg style="left:21px;top:353.1px" width="3" height="3"><path d="M3 0 V3 H0 Z" fill="#a8a8a8"/></svg>
<svg style="left:5.8px;top:362.1px" width="14.8" height="14.8" viewBox="0 0 16 16"><g transform="rotate(40 8 8)"><path d="M8 15.6 L4.2 8.4 L5 3.8 H11 L11.8 8.4 Z" fill="none" stroke="#d2d2d2" stroke-width="1.3" stroke-linejoin="round"/><path d="M8 15 V9.4" stroke="#d2d2d2" stroke-width="1"/><circle cx="8" cy="8.6" r="1.2" fill="#d2d2d2"/><rect x="4.8" y="0.6" width="6.4" height="2.2" fill="#d2d2d2"/></g></svg><svg style="left:21px;top:373.5px" width="3" height="3"><path d="M3 0 V3 H0 Z" fill="#a8a8a8"/></svg>
<svg style="left:5.8px;top:382.5px" width="14.8" height="14.8" viewBox="0 0 16 16"><path d="M2.4 2.2 H13.6 V5.4 H12.4 L12 3.8 H9.2 V12.4 L10.8 12.8 V13.8 H5.2 V12.8 L6.8 12.4 V3.8 H4 L3.6 5.4 H2.4 Z" fill="#d2d2d2"/></svg><svg style="left:21px;top:393.9px" width="3" height="3"><path d="M3 0 V3 H0 Z" fill="#a8a8a8"/></svg>
<svg style="left:5.8px;top:402.9px" width="14.8" height="14.8" viewBox="0 0 16 16"><path d="M4.2 1.4 L12 9.2 H8.6 L10.4 13.4 L8.6 14.2 L6.8 10 L4.2 12.4 Z" fill="#1c1c1c" stroke="#d2d2d2" stroke-width="1.1" stroke-linejoin="round"/></svg><svg style="left:21px;top:414.3px" width="3" height="3"><path d="M3 0 V3 H0 Z" fill="#a8a8a8"/></svg>
<svg style="left:5.8px;top:423.3px" width="14.8" height="14.8" viewBox="0 0 16 16"><ellipse cx="8" cy="8.2" rx="5.8" ry="4.8" fill="#8a8a8a" stroke="#d2d2d2" stroke-width="1.2"/></svg><svg style="left:21px;top:434.7px" width="3" height="3"><path d="M3 0 V3 H0 Z" fill="#a8a8a8"/></svg>
<svg style="left:5.8px;top:443.7px" width="14.8" height="14.8" viewBox="0 0 16 16"><path d="M4.4 8.6 V4 C4.4 3 5.8 3 5.8 4 V7.4 V2.6 C5.8 1.6 7.2 1.6 7.2 2.6 V7.2 V2.2 C7.2 1.2 8.7 1.2 8.7 2.2 V7.4 V3 C8.7 2 10.2 2 10.2 3 V9 L11.8 6.8 C12.6 5.8 13.8 6.6 13.2 7.6 L10.6 12.6 C10 13.8 9 14.4 7.6 14.4 C5.4 14.4 4.2 13.2 3.4 11.6 L1.8 8.6 C1.4 7.6 2.6 7 3.2 7.8 Z" fill="#d2d2d2"/></svg><svg style="left:21px;top:455.1px" width="3" height="3"><path d="M3 0 V3 H0 Z" fill="#a8a8a8"/></svg>
<svg style="left:5.8px;top:464.1px" width="14.8" height="14.8" viewBox="0 0 16 16"><circle cx="6.4" cy="6.4" r="4.4" fill="none" stroke="#d2d2d2" stroke-width="1.4"/><path d="M9.6 9.6 L14 14" stroke="#d2d2d2" stroke-width="2" stroke-linecap="round"/></svg>
<svg style="left:5.8px;top:484.5px" width="14.8" height="14.8" viewBox="0 0 16 16"><circle cx="3.6" cy="8.4" r="1.5" fill="#d2d2d2"/><circle cx="8.3" cy="8.4" r="1.5" fill="#d2d2d2"/><circle cx="13" cy="8.4" r="1.5" fill="#d2d2d2"/></svg><svg style="left:21px;top:495.9px" width="3" height="3"><path d="M3 0 V3 H0 Z" fill="#a8a8a8"/></svg>
<svg style="left:1.5px;top:505.5px" width="9" height="9"><rect x="3.2" y="3.2" width="5" height="5" fill="#e0e0e0" stroke="#e0e0e0" stroke-width="0.8"/><rect x="0.6" y="0.6" width="5" height="5" fill="#111" stroke="#e0e0e0" stroke-width="0.9"/></svg>
<svg style="left:15.5px;top:505.5px" width="9" height="9"><path d="M2.4 0.8 L0.6 2.4 L2.4 4 M0.8 2.4 H6.4 V7.6 M4.8 6.2 L6.4 8 L8 6.2" fill="none" stroke="#e0e0e0" stroke-width="1.1"/></svg>
<div class="r" style="left:10.3px;top:527.7px;width:14px;height:14px;background:#1e1e1e;border:1px solid #d8d8d8;box-sizing:border-box;border-radius:1px;"></div>
<div class="r" style="left:2.2px;top:519.3px;width:14.4px;height:14.4px;background:#ffd466;border:1px solid #f4f4f4;box-sizing:border-box;"></div>
<svg style="left:6px;top:550.5px" width="14" height="11"><rect x="0.6" y="0.6" width="12.8" height="9.6" fill="none" stroke="#d0d0d0" stroke-width="1.1"/><circle cx="7" cy="5.4" r="2.8" fill="none" stroke="#b8b8b8" stroke-width="1"/></svg>
<svg style="left:6px;top:571px" width="14" height="12"><rect x="4.6" y="0.6" width="8.8" height="6.6" fill="none" stroke="#d0d0d0" stroke-width="1.1"/><rect x="0.6" y="3.6" width="8.8" height="6.6" fill="#535353" stroke="#d0d0d0" stroke-width="1.1"/></svg>
<svg style="left:21px;top:582px" width="3" height="3"><path d="M3 0 V3 H0 Z" fill="#a8a8a8"/></svg>
<!-- sec_panels -->
<div class="r" style="left:692px;top:51px;width:308px;height:699px;background:#505050;"></div>
<div class="r" style="left:691.5px;top:73px;width:12px;height:677px;background:#4a4a4a;"></div>
<div class="r" style="left:704px;top:51px;width:296px;height:10px;background:#3d3d3d;"></div>
<div class="r" style="left:703.5px;top:61px;width:2px;height:689px;background:#404040;"></div>
<div class="r" style="left:705.5px;top:61px;width:267px;height:21px;background:#424242;"></div>
<div class="r" style="left:705.5px;top:82px;width:267px;height:668px;background:#4e4e4e;"></div>
<div class="r" style="left:961.5px;top:150px;width:11px;height:600px;background:#474747;"></div>
<div class="r" style="left:972.5px;top:51px;width:3px;height:699px;background:#3a3a3a;"></div>
<div class="r" style="left:975.5px;top:61px;width:24.5px;height:689px;background:#545454;"></div>
<svg style="left:961.5px;top:52.5px" width="8" height="6"><path d="M0.6 0.6 L2.8 2.8 L0.6 5 M3.8 0.6 L6 2.8 L3.8 5" fill="none" stroke="#d0d0d0" stroke-width="1.1"/></svg>
<svg style="left:992.5px;top:52.5px" width="8" height="6"><path d="M2.8 0.6 L0.6 2.8 L2.8 5 M6 0.6 L3.8 2.8 L6 5" fill="none" stroke="#d0d0d0" stroke-width="1.1"/></svg>
<div class="r" style="left:872px;top:61px;width:33.5px;height:21px;background:#4e4e4e;"></div>
<div class="r" style="left:871px;top:61px;width:1px;height:21px;background:#3a3a3a;"></div>
<div class="r" style="left:905.5px;top:61px;width:1px;height:21px;background:#3a3a3a;"></div>
<div class="r" style="left:713.6px;top:64px;width:25.600000000000023px;height:14px;overflow:hidden;"><div class="t" style="top:1.87px;font-size:9.6px;color:#b4b4b4;font-weight:bold;left:0.00px;transform-origin:0 0;transform:scaleX(0.7430);">Каналь</div></div>
<div class="r" style="left:746.7px;top:64px;width:25.299999999999955px;height:14px;overflow:hidden;"><div class="t" style="top:1.87px;font-size:9.6px;color:#b4b4b4;font-weight:bold;left:0.00px;transform-origin:0 0;transform:scaleX(0.7543);">Контур</div></div>
<div class="r" style="left:779.5px;top:64px;width:25.299999999999955px;height:14px;overflow:hidden;"><div class="t" style="top:1.87px;font-size:9.6px;color:#b4b4b4;font-weight:bold;left:0.00px;transform-origin:0 0;transform:scaleX(0.7330);">Свойст</div></div>
<div class="r" style="left:812.8px;top:64px;width:25.600000000000023px;height:14px;overflow:hidden;"><div class="t" style="top:1.87px;font-size:9.6px;color:#b4b4b4;font-weight:bold;left:0.00px;transform-origin:0 0;transform:scaleX(0.8108);">Наб.ки</div></div>
<div class="r" style="left:845.6px;top:64px;width:24.899999999999977px;height:14px;overflow:hidden;"><div class="t" style="top:1.87px;font-size:9.6px;color:#b4b4b4;font-weight:bold;left:0.00px;transform-origin:0 0;transform:scaleX(0.6973);">Операц</div></div>
<div class="r" style="left:912px;top:64px;width:29px;height:14px;overflow:hidden;"><div class="t" style="top:1.87px;font-size:9.6px;color:#b4b4b4;font-weight:bold;left:0.00px;transform-origin:0 0;transform:scaleX(0.8420);">Истори</div></div>
<div class="t" style="top:65.87px;font-size:9.6px;color:#f4f4f4;font-weight:bold;left:878.00px;transform-origin:0 0;transform:scaleX(0.8715);">Слои</div>
<div class="r" style="left:960px;top:68px;width:8px;height:1.3px;background:#a0a0a0;"></div>
<div class="r" style="left:960px;top:70.4px;width:8px;height:1.3px;background:#a0a0a0;"></div>
<div class="r" style="left:960px;top:72.8px;width:8px;height:1.3px;background:#a0a0a0;"></div>
<div class="r" style="left:710px;top:89.2px;width:96px;height:13.6px;background:#424242;border-radius:2px;"></div>
<svg style="left:711.5px;top:88.0px" width="16" height="16" viewBox="0 0 16 16"><circle cx="9.4" cy="6.6" r="3.1" fill="none" stroke="#d8d8d8" stroke-width="1.3"/><path d="M7.2 8.8 L3.6 12.4" stroke="#d8d8d8" stroke-width="1.6" stroke-linecap="round"/></svg>
<div class="t" style="top:90.67px;font-size:9.6px;color:#e6e6e6;left:726.40px;transform-origin:0 0;transform:scaleX(0.8407);">Вид</div>
<svg style="left:797.5px;top:94.2px" width="6.5" height="4"><path d="M0.5 0.5 L3.25 3.5 L6.0 0.5" fill="none" stroke="#c2c2c2" stroke-width="1.05"/></svg>
<svg style="left:838.0px;top:88.3px" width="16" height="16" viewBox="0 0 16 16"><rect x="2.6" y="4" width="10.8" height="8" fill="none" stroke="#d8d8d8" stroke-width="1.2"/><path d="M4.6 10.4 L6.6 7.4 L8 9.4 L9.4 8 L11.4 10.4 Z" fill="#d8d8d8"/></svg>
<svg style="left:857.3px;top:88.3px" width="16" height="16" viewBox="0 0 16 16"><circle cx="8" cy="8" r="4.4" fill="none" stroke="#d8d8d8" stroke-width="1.2"/><path d="M4.9 11.1 A4.4 4.4 0 0 1 11.1 4.9 Z" fill="#d8d8d8"/></svg>
<svg style="left:876.5px;top:88.3px" width="16" height="16" viewBox="0 0 16 16"><path d="M3.2 3.6 H12.8 V6.2 H11.8 L11.4 4.9 H9 V11.4 L10.2 11.7 V12.6 H5.8 V11.7 L7 11.4 V4.9 H4.6 L4.2 6.2 H3.2 Z" fill="#d8d8d8"/></svg>
<svg style="left:894.8px;top:88.3px" width="16" height="16" viewBox="0 0 16 16"><rect x="4" y="4.2" width="8" height="7.6" fill="none" stroke="#d8d8d8" stroke-width="1.1"/><path d="M3 3.2h2v2h-2z M11 3.2h2v2h-2z M3 10.8h2v2h-2z M11 10.8h2v2h-2z" fill="#d8d8d8"/></svg>
<svg style="left:914.2px;top:88.3px" width="16" height="16" viewBox="0 0 16 16"><path d="M5.6 3 H10 L12.4 5.4 V13 H5.6 Z" fill="none" stroke="#d8d8d8" stroke-width="1.2"/><rect x="3.4" y="8" width="5" height="4.6" fill="#d8d8d8"/><path d="M9.6 3.2 V5.8 H12.2" fill="none" stroke="#d8d8d8" stroke-width="1"/></svg>
<div class="r" style="left:963px;top:89.5px;width:7px;height:14.5px;background:#3f3f3f;border-radius:3.5px;"></div>
<div class="r" style="left:963.2px;top:89.6px;width:6.6px;height:6.6px;background:#e6e6e6;border-radius:50%;"></div>
<div class="r" style="left:707px;top:106.5px;width:265px;height:1px;background:#444444;"></div>
<div class="r" style="left:710px;top:111px;width:147.6px;height:12.8px;background:#424242;border-radius:2px;"></div>
<div class="t" style="top:111.87px;font-size:9.6px;color:#e6e6e6;left:715.50px;transform-origin:0 0;transform:scaleX(0.8065);">Обычные</div>
<svg style="left:848.8px;top:115.6px" width="6.5" height="4"><path d="M0.5 0.5 L3.25 3.5 L6.0 0.5" fill="none" stroke="#c2c2c2" stroke-width="1.05"/></svg>
<div class="t" style="top:111.67px;font-size:9.6px;color:#c4c4c4;left:864.00px;transform-origin:0 0;transform:scaleX(0.8168);">Непрозрачность:</div>
<div class="t" style="top:111.67px;font-size:9.6px;color:#ececec;left:933.00px;transform-origin:0 0;transform:scaleX(0.7942);">100%</div>
<div class="r" style="left:928px;top:124px;width:42px;height:1px;background:#6e6e6e;"></div>
<svg style="left:961.5px;top:115.8px" width="6.5" height="4"><path d="M0.5 0.5 L3.25 3.5 L6.0 0.5" fill="none" stroke="#c2c2c2" stroke-width="1.05"/></svg>
<div class="r" style="left:707px;top:127px;width:265px;height:1px;background:#444444;"></div>
<div class="t" style="top:133.27px;font-size:9.6px;color:#c4c4c4;left:710.40px;transform-origin:0 0;transform:scaleX(0.8326);">Закрепить:</div>
<svg style="left:755.2px;top:130.8px" width="16" height="16" viewBox="0 0 16 16"><rect x="3" y="3" width="10" height="10" fill="#e2e2e2"/><path d="M4.2 4.2h2.4v2.4h-2.4z M9.4 4.2h2.4v2.4h-2.4z M6.8 6.8h2.4v2.4h-2.4z M4.2 9.4h2.4v2.4h-2.4z M9.4 9.4h2.4v2.4h-2.4z" fill="#3c3c3c"/></svg>
<svg style="left:772.8px;top:130.8px" width="16" height="16" viewBox="0 0 16 16"><path d="M12.4 2.6 L13.4 3.6 L8.2 9.6 L6.6 8 Z" fill="#e2e2e2"/><path d="M6 8.8 L7.6 10.4 C7.2 12.4 5.2 13.4 3 13.2 C4.2 12.2 4 9.6 6 8.8 Z" fill="#e2e2e2"/></svg>
<svg style="left:789.6px;top:130.8px" width="16" height="16" viewBox="0 0 16 16"><path d="M8 2.4 L10 4.8 H8.6 V7.4 H11.2 V6 L13.6 8 L11.2 10 V8.6 H8.6 V11.2 H10 L8 13.6 L6 11.2 H7.4 V8.6 H4.8 V10 L2.4 8 L4.8 6 V7.4 H7.4 V4.8 H6 Z" fill="#e2e2e2"/></svg>
<svg style="left:807.5px;top:130.8px" width="16" height="16" viewBox="0 0 16 16"><path d="M4.8 2.4 V11.2 H13.6 M2.4 4.8 H11.2 V13.6" fill="none" stroke="#e2e2e2" stroke-width="1.3"/><path d="M10.6 2.6 L13.4 5.4" stroke="#e2e2e2" stroke-width="1" stroke-dasharray="1.2 1"/></svg>
<svg style="left:824.8px;top:130.8px" width="16" height="16" viewBox="0 0 16 16"><rect x="3.6" y="7" width="8.8" height="6.4" rx="0.8" fill="#e2e2e2"/><path d="M5.4 7 V5.4 A2.6 2.6 0 0 1 10.6 5.4 V7" fill="none" stroke="#e2e2e2" stroke-width="1.4"/><rect x="7.4" y="9.2" width="1.2" height="2.2" fill="#4a4a4a"/></svg>
<div class="t" style="top:132.87px;font-size:9.6px;color:#c4c4c4;left:894.00px;transform-origin:0 0;transform:scaleX(0.7976);">Заливка:</div>
<div class="t" style="top:132.87px;font-size:9.6px;color:#ececec;left:933.00px;transform-origin:0 0;transform:scaleX(0.7942);">100%</div>
<div class="r" style="left:928px;top:145.6px;width:42px;height:1px;background:#6e6e6e;"></div>
<svg style="left:961.5px;top:137.4px" width="6.5" height="4"><path d="M0.5 0.5 L3.25 3.5 L6.0 0.5" fill="none" stroke="#c2c2c2" stroke-width="1.05"/></svg>
<div class="r" style="left:707px;top:150.5px;width:254.5px;height:30.5px;background:#525252;"></div>
<div class="r" style="left:730px;top:150.5px;width:231.5px;height:30px;background:#6a6a6a;"></div>
<div class="r" style="left:707px;top:181.2px;width:254.5px;height:30px;background:#535353;"></div>
<div class="r" style="left:707px;top:180.6px;width:254.5px;height:0.8px;background:#454545;"></div>
<div class="r" style="left:707px;top:211px;width:254.5px;height:0.8px;background:#454545;"></div>
<svg style="left:710.4px;top:158.0px" width="16" height="16" viewBox="0 0 16 16"><path d="M1.6 8 C4 4.4 12 4.4 14.4 8 C12 11.6 4 11.6 1.6 8 Z" fill="#e8e8e8"/><circle cx="8" cy="8" r="2.3" fill="#4a4a4a"/><circle cx="8" cy="8" r="1" fill="#e8e8e8"/></svg>
<svg style="left:710.4px;top:188.8px" width="16" height="16" viewBox="0 0 16 16"><path d="M1.6 8 C4 4.4 12 4.4 14.4 8 C12 11.6 4 11.6 1.6 8 Z" fill="#e8e8e8"/><circle cx="8" cy="8" r="2.3" fill="#4a4a4a"/><circle cx="8" cy="8" r="1" fill="#e8e8e8"/></svg>
<div class="r" style="left:731.2px;top:151.4px;width:26.4px;height:28.4px;background:#f0f0f0;"></div>
<div class="r" style="left:733px;top:151px;width:22.8px;height:29px;background:#6a6a6a;"></div>
<div class="r" style="left:731px;top:156px;width:27px;height:19px;background:#6a6a6a;"></div>
<div class="r" style="left:732.4px;top:152.6px;width:24px;height:26px;background:#1a1a1a;"></div>
<svg style="left:733.6px;top:153.8px" width="21.6" height="23.6" viewBox="148 176 439 497" preserveAspectRatio="none"><use href="#beach"/></svg>
<div class="t" style="top:161.70px;font-size:9.8px;color:#f0f0f0;left:763.70px;transform-origin:0 0;transform:scaleX(0.7624);">Слой 1</div>
<div class="r" style="left:733.4px;top:184.6px;width:22px;height:23.6px;background:#ffffff;box-shadow:0 0 0 0.8px #3a3a3a;"></div>
<div class="t" style="top:191.87px;font-size:9.6px;color:#e8e8e8;font-style:italic;left:764.00px;transform-origin:0 0;transform:scaleX(0.8218);">Фон</div>
<svg style="left:935.5px;top:188.8px" width="16" height="16" viewBox="0 0 16 16"><rect x="4" y="7.4" width="8" height="5.8" fill="none" stroke="#d0d0d0" stroke-width="1.2"/><path d="M5.6 7.4 V5.6 A2.4 2.4 0 0 1 10.4 5.6 V7.4" fill="none" stroke="#d0d0d0" stroke-width="1.2"/><rect x="7.4" y="9.4" width="1.2" height="2" fill="#d0d0d0"/></svg>
<svg style="left:981.8px;top:70.7px" width="16" height="16" viewBox="0 0 16 16"><circle cx="8" cy="8" r="3.6" fill="none" stroke="#e4e4e4" stroke-width="1.5"/><circle cx="8" cy="8" r="1.2" fill="#e4e4e4"/><path d="M8 0.6 V15.4 M0.6 8 H15.4 M2.8 2.8 L13.2 13.2 M13.2 2.8 L2.8 13.2" stroke="#e4e4e4" stroke-width="1.1"/></svg>
<svg style="left:981.8px;top:93.3px" width="16" height="16" viewBox="0 0 16 16"><circle cx="8" cy="8" r="6.2" fill="none" stroke="#e4e4e4" stroke-width="1.3"/><rect x="7.2" y="6.8" width="1.7" height="4.8" fill="#e4e4e4"/><circle cx="8.05" cy="4.8" r="1" fill="#e4e4e4"/></svg>
<svg style="left:981.8px;top:114.9px" width="16" height="16" viewBox="0 0 16 16"><path d="M1 13.6 V9 L2.4 7 L3.4 9 L4.4 4.6 L5.6 8 L6.6 3 L7.8 7.6 L8.8 4 L10 8 L11 5 L12.2 8.6 L13.4 6 L15 9.6 V13.6 Z" fill="#e4e4e4"/><rect x="1" y="11" width="14" height="0.9" fill="#545454"/></svg>
<svg style="left:981.8px;top:147.3px" width="16" height="16" viewBox="0 0 16 16"><path d="M8 2.6 C12 2.6 15 5 15 8 C15 10 13.4 10.6 12 10.4 C10.6 10.2 10 11 10.4 12 C10.8 13 10 13.6 8 13.6 C4 13.6 1 11.2 1 8 C1 5 4 2.6 8 2.6 Z" fill="#e4e4e4"/><circle cx="4.4" cy="8.6" r="1.1" fill="#545454"/><circle cx="6" cy="5.6" r="1.1" fill="#545454"/><circle cx="9.4" cy="5" r="1.1" fill="#545454"/><circle cx="12.2" cy="7" r="1.1" fill="#545454"/><circle cx="6.4" cy="11" r="1.1" fill="#545454"/></svg>
<svg style="left:981.8px;top:168.4px" width="16" height="16" viewBox="0 0 16 16"><rect x="1.6" y="1.6" width="12.8" height="12.8" fill="none" stroke="#e4e4e4" stroke-width="1.3"/><path d="M5.9 1.6 V14.4 M10.1 1.6 V14.4 M1.6 5.9 H14.4 M1.6 10.1 H14.4" stroke="#e4e4e4" stroke-width="1.2"/></svg>
<svg style="left:981.8px;top:200.8px" width="16" height="16" viewBox="0 0 16 16"><circle cx="8" cy="8" r="5.8" fill="none" stroke="#e4e4e4" stroke-width="1.4"/><path d="M3.9 12.1 A5.8 5.8 0 0 1 12.1 3.9 Z" fill="#e4e4e4"/></svg>
<svg style="left:981.8px;top:223.6px" width="16" height="16" viewBox="0 0 16 16"><path d="M5 2 H15 V12" fill="none" stroke="#e4e4e4" stroke-width="1.4"/><path d="M9.4 3.6 H13.4 V8" fill="#e4e4e4"/></svg>
<div class="t" style="top:226.77px;font-size:11.5px;color:#eeeeee;font-weight:bold;font-style:italic;left:979.50px;transform-origin:0 0;transform:scaleX(0.9291);">fx</div>
<svg style="left:981.8px;top:254.7px" width="16" height="16" viewBox="0 0 16 16"><path d="M4.6 8.4 H11.6 L11 14.6 H5.2 Z" fill="#e4e4e4"/><path d="M6.4 8 L4.4 3.2 M8.2 8 V1.6 M10 8 L12.2 3.6" stroke="#e4e4e4" stroke-width="1.3"/><circle cx="4.2" cy="2.8" r="1.4" fill="#e4e4e4"/><ellipse cx="8.2" cy="2.2" rx="1.1" ry="1.8" fill="#e4e4e4"/><circle cx="12.4" cy="3.4" r="1.4" fill="#e4e4e4"/></svg>
<svg style="left:981.8px;top:278.0px" width="16" height="16" viewBox="0 0 16 16"><path d="M1.4 4 H6 M7.6 4 H14.8 M1.4 11 H9" stroke="#e4e4e4" stroke-width="1.3"/><ellipse cx="4.4" cy="4" rx="2.6" ry="1.7" fill="#e4e4e4"/><path d="M9 11 L13.6 8.4 V13.6 Z" fill="#e4e4e4"/><circle cx="13.4" cy="11" r="2.2" fill="#e4e4e4"/></svg>
<svg style="left:981.8px;top:299.3px" width="16" height="16" viewBox="0 0 16 16"><path d="M10.4 2.4 A2.3 2.3 0 0 1 11.8 6.6 L12 8.8 H15 V11 H5.8 V8.8 H8.8 L9 6.6 A2.3 2.3 0 0 1 10.4 2.4 Z" fill="#e4e4e4"/><rect x="5.8" y="12" width="9.2" height="1.5" fill="#e4e4e4"/><path d="M1 3.4h1.4v1.2h-1.4z M3.2 3.4h1.4v1.2h-1.4z M1 5.8h1.4v1.2h-1.4z M3.2 5.8h1.4v1.2h-1.4z M1 8.2h1.4v1.2h-1.4z M3.2 8.2h1.4v1.2h-1.4z" fill="#e4e4e4"/></svg>
<div class="t" style="top:332.77px;font-size:13.5px;color:#e8e8e8;left:981.80px;transform-origin:0 0;transform:scaleX(1.0217);">A</div>
<div class="r" style="left:992.6px;top:333px;width:1.1px;height:12.6px;background:#e0e0e0;"></div>
<svg style="left:981.8px;top:353.7px" width="16" height="16" viewBox="0 0 16 16"><path d="M6.6 2.4 H13 V3.8 H12 V14 H10.6 V3.8 H9.2 V14 H7.8 V8.6 H6.6 A3.1 3.1 0 0 1 6.6 2.4 Z" fill="#e4e4e4"/></svg>
<div class="r" style="left:975.5px;top:135.5px;width:24.5px;height:1.6px;background:#3c3c3c;"></div>
<div class="r" style="left:975.5px;top:190.0px;width:24.5px;height:1.6px;background:#3c3c3c;"></div>
<div class="r" style="left:975.5px;top:243.2px;width:24.5px;height:1.6px;background:#3c3c3c;"></div>
<div class="r" style="left:975.5px;top:319.2px;width:24.5px;height:1.6px;background:#3c3c3c;"></div>
<div class="r" style="left:975.5px;top:374.7px;width:24.5px;height:1.6px;background:#3c3c3c;"></div>
<div class="r" style="left:985px;top:64px;width:9px;height:1px;background:#4a4a4a;border-top:1px dotted #686868;box-sizing:border-box;"></div>
<div class="r" style="left:985px;top:140px;width:9px;height:1px;background:#4a4a4a;border-top:1px dotted #686868;box-sizing:border-box;"></div>
<div class="r" style="left:985px;top:194.5px;width:9px;height:1px;background:#4a4a4a;border-top:1px dotted #686868;box-sizing:border-box;"></div>
<div class="r" style="left:985px;top:248px;width:9px;height:1px;background:#4a4a4a;border-top:1px dotted #686868;box-sizing:border-box;"></div>
<div class="r" style="left:985px;top:324px;width:9px;height:1px;background:#4a4a4a;border-top:1px dotted #686868;box-sizing:border-box;"></div>
<div class="r" style="left:975.5px;top:376.3px;width:24.5px;height:373.7px;background:#555555;"></div>
<!-- sec_menu -->
<div class="r" style="left:29px;top:20px;width:246px;height:441px;background:#f0f0f0;border:1px solid #979797;box-sizing:border-box;box-shadow:2px 2px 3px rgba(0,0,0,0.45);"></div>
<div class="t" style="top:24.87px;font-size:9.6px;color:#141414;left:45.00px;transform-origin:0 0;transform:scaleX(0.9217);-webkit-text-stroke:0.22px #141414;">Создать...</div>
<div class="t" style="top:24.87px;font-size:9.6px;color:#141414;right:740.00px;transform-origin:100% 0;transform:scaleX(1.0193);-webkit-text-stroke:0.22px #141414;">Ctrl+N</div>
<div class="t" style="top:39.87px;font-size:9.6px;color:#141414;left:45.00px;transform-origin:0 0;transform:scaleX(0.9627);-webkit-text-stroke:0.22px #141414;">Открыть...</div>
<div class="t" style="top:39.87px;font-size:9.6px;color:#141414;right:740.00px;transform-origin:100% 0;-webkit-text-stroke:0.22px #141414;">Ctrl+O</div>
<div class="t" style="top:54.87px;font-size:9.6px;color:#141414;left:45.00px;transform-origin:0 0;transform:scaleX(0.9525);-webkit-text-stroke:0.22px #141414;">Обзор в Bridge...</div>
<div class="t" style="top:54.87px;font-size:9.6px;color:#141414;right:740.00px;transform-origin:100% 0;transform:scaleX(1.0265);-webkit-text-stroke:0.22px #141414;">Alt+Ctrl+O</div>
<div class="t" style="top:69.87px;font-size:9.6px;color:#141414;left:45.00px;transform-origin:0 0;transform:scaleX(0.9692);-webkit-text-stroke:0.22px #141414;">Открыть как...</div>
<div class="t" style="top:69.87px;font-size:9.6px;color:#141414;right:740.00px;transform-origin:100% 0;transform:scaleX(1.0240);-webkit-text-stroke:0.22px #141414;">Alt+Shift+Ctrl+O</div>
<div class="t" style="top:84.87px;font-size:9.6px;color:#141414;left:45.00px;transform-origin:0 0;transform:scaleX(0.9875);-webkit-text-stroke:0.22px #141414;">Открыть как смарт-объект...</div>
<div class="t" style="top:100.27px;font-size:9.6px;color:#141414;left:45.00px;transform-origin:0 0;transform:scaleX(0.9749);-webkit-text-stroke:0.22px #141414;">Последние документы</div>
<svg style="left:264px;top:101.3px" width="5" height="8"><path d="M0.3 0 L4 3.5 L0.3 7 Z" fill="#1c1c1c"/></svg>
<div class="r" style="left:32px;top:113.5px;width:241px;height:1px;background:#a8a8a8;"></div>
<div class="r" style="left:32px;top:114.5px;width:241px;height:1px;background:#fafafa;"></div>
<div class="t" style="top:121.87px;font-size:9.6px;color:#141414;left:45.00px;transform-origin:0 0;transform:scaleX(0.9736);-webkit-text-stroke:0.22px #141414;">Закрыть</div>
<div class="t" style="top:121.87px;font-size:9.6px;color:#141414;right:740.00px;transform-origin:100% 0;transform:scaleX(1.0136);-webkit-text-stroke:0.22px #141414;">Ctrl+W</div>
<div class="t" style="top:136.67px;font-size:9.6px;color:#141414;left:45.00px;transform-origin:0 0;transform:scaleX(0.9567);-webkit-text-stroke:0.22px #141414;">Закрыть все</div>
<div class="t" style="top:136.67px;font-size:9.6px;color:#141414;right:740.00px;transform-origin:100% 0;transform:scaleX(1.0343);-webkit-text-stroke:0.22px #141414;">Alt+Ctrl+W</div>
<div class="t" style="top:151.47px;font-size:9.6px;color:#141414;left:45.00px;transform-origin:0 0;transform:scaleX(0.9555);-webkit-text-stroke:0.22px #141414;">Закрыть и перейти в Bridge...</div>
<div class="t" style="top:151.47px;font-size:9.6px;color:#141414;right:740.00px;transform-origin:100% 0;-webkit-text-stroke:0.22px #141414;">Shift+Ctrl+W</div>
<div class="t" style="top:166.37px;font-size:9.6px;color:#141414;left:45.00px;transform-origin:0 0;transform:scaleX(0.9433);-webkit-text-stroke:0.22px #141414;">Сохранить</div>
<div class="t" style="top:166.37px;font-size:9.6px;color:#141414;right:740.00px;transform-origin:100% 0;transform:scaleX(0.9466);-webkit-text-stroke:0.22px #141414;">Ctrl+S</div>
<div class="r" style="left:32px;top:178.5px;width:241px;height:14.6px;background:#3399ff;"></div>
<div class="t" style="top:181.17px;font-size:9.6px;color:#ffffff;left:45.00px;transform-origin:0 0;transform:scaleX(0.9540);-webkit-text-stroke:0.22px #ffffff;">Сохранить как...</div>
<div class="t" style="top:181.17px;font-size:9.6px;color:#ffffff;right:740.00px;transform-origin:100% 0;transform:scaleX(0.9758);-webkit-text-stroke:0.22px #ffffff;">Shift+Ctrl+S</div>
<div class="t" style="top:196.17px;font-size:9.6px;color:#8c8c8c;left:45.00px;transform-origin:0 0;transform:scaleX(0.9568);-webkit-text-stroke:0.22px #8c8c8c;">Разблокировать для записи...</div>
<div class="t" style="top:210.87px;font-size:9.6px;color:#8c8c8c;left:45.00px;transform-origin:0 0;transform:scaleX(0.9500);-webkit-text-stroke:0.22px #8c8c8c;">Восстановить</div>
<div class="t" style="top:210.87px;font-size:9.6px;color:#8c8c8c;right:740.00px;transform-origin:100% 0;transform:scaleX(0.8463);-webkit-text-stroke:0.22px #8c8c8c;">F12</div>
<div class="r" style="left:32px;top:225.5px;width:241px;height:1px;background:#a8a8a8;"></div>
<div class="r" style="left:32px;top:226.5px;width:241px;height:1px;background:#fafafa;"></div>
<div class="t" style="top:233.87px;font-size:9.6px;color:#141414;left:45.00px;transform-origin:0 0;transform:scaleX(0.9717);-webkit-text-stroke:0.22px #141414;">Экспортировать</div>
<svg style="left:264px;top:234.9px" width="5" height="8"><path d="M0.3 0 L4 3.5 L0.3 7 Z" fill="#1c1c1c"/></svg>
<div class="t" style="top:248.57px;font-size:9.6px;color:#141414;left:45.00px;transform-origin:0 0;transform:scaleX(0.9701);-webkit-text-stroke:0.22px #141414;">Генерировать</div>
<svg style="left:264px;top:249.6px" width="5" height="8"><path d="M0.3 0 L4 3.5 L0.3 7 Z" fill="#1c1c1c"/></svg>
<div class="r" style="left:32px;top:262.5px;width:241px;height:1px;background:#a8a8a8;"></div>
<div class="r" style="left:32px;top:263.5px;width:241px;height:1px;background:#fafafa;"></div>
<div class="t" style="top:269.87px;font-size:9.6px;color:#141414;left:45.00px;transform-origin:0 0;transform:scaleX(0.9691);-webkit-text-stroke:0.22px #141414;">Поиск в Adobe Stock...</div>
<div class="t" style="top:284.87px;font-size:9.6px;color:#141414;left:45.00px;transform-origin:0 0;transform:scaleX(0.9691);-webkit-text-stroke:0.22px #141414;">Поместить встроенные...</div>
<div class="t" style="top:299.87px;font-size:9.6px;color:#141414;left:45.00px;transform-origin:0 0;transform:scaleX(0.9588);-webkit-text-stroke:0.22px #141414;">Поместить связанные...</div>
<div class="t" style="top:314.57px;font-size:9.6px;color:#8c8c8c;left:45.00px;transform-origin:0 0;transform:scaleX(0.9556);-webkit-text-stroke:0.22px #8c8c8c;">Упаковать...</div>
<div class="r" style="left:32px;top:329.5px;width:241px;height:1px;background:#a8a8a8;"></div>
<div class="r" style="left:32px;top:330.5px;width:241px;height:1px;background:#fafafa;"></div>
<div class="t" style="top:337.37px;font-size:9.6px;color:#141414;left:45.00px;transform-origin:0 0;transform:scaleX(0.9676);-webkit-text-stroke:0.22px #141414;">Автоматизация</div>
<svg style="left:264px;top:338.4px" width="5" height="8"><path d="M0.3 0 L4 3.5 L0.3 7 Z" fill="#1c1c1c"/></svg>
<div class="t" style="top:352.27px;font-size:9.6px;color:#141414;left:45.00px;transform-origin:0 0;transform:scaleX(0.9692);-webkit-text-stroke:0.22px #141414;">Сценарии</div>
<svg style="left:264px;top:353.3px" width="5" height="8"><path d="M0.3 0 L4 3.5 L0.3 7 Z" fill="#1c1c1c"/></svg>
<div class="t" style="top:367.17px;font-size:9.6px;color:#141414;left:45.00px;transform-origin:0 0;-webkit-text-stroke:0.22px #141414;">Импортировать</div>
<svg style="left:264px;top:368.2px" width="5" height="8"><path d="M0.3 0 L4 3.5 L0.3 7 Z" fill="#1c1c1c"/></svg>
<div class="r" style="left:32px;top:381.5px;width:241px;height:1px;background:#a8a8a8;"></div>
<div class="r" style="left:32px;top:382.5px;width:241px;height:1px;background:#fafafa;"></div>
<div class="t" style="top:388.47px;font-size:9.6px;color:#141414;left:45.00px;transform-origin:0 0;transform:scaleX(0.9275);-webkit-text-stroke:0.22px #141414;">Сведения о файле...</div>
<div class="t" style="top:388.47px;font-size:9.6px;color:#141414;right:740.00px;transform-origin:100% 0;transform:scaleX(1.0258);-webkit-text-stroke:0.22px #141414;">Alt+Shift+Ctrl+I</div>
<div class="r" style="left:32px;top:402.5px;width:241px;height:1px;background:#a8a8a8;"></div>
<div class="r" style="left:32px;top:403.5px;width:241px;height:1px;background:#fafafa;"></div>
<div class="t" style="top:410.27px;font-size:9.6px;color:#141414;left:45.00px;transform-origin:0 0;transform:scaleX(0.9413);-webkit-text-stroke:0.22px #141414;">Печатать...</div>
<div class="t" style="top:410.27px;font-size:9.6px;color:#141414;right:740.00px;transform-origin:100% 0;transform:scaleX(0.9651);-webkit-text-stroke:0.22px #141414;">Ctrl+P</div>
<div class="t" style="top:425.27px;font-size:9.6px;color:#141414;left:45.00px;transform-origin:0 0;transform:scaleX(0.9840);-webkit-text-stroke:0.22px #141414;">Печать одного экземпляра</div>
<div class="t" style="top:425.27px;font-size:9.6px;color:#141414;right:740.00px;transform-origin:100% 0;transform:scaleX(1.0137);-webkit-text-stroke:0.22px #141414;">Alt+Shift+Ctrl+P</div>
<div class="r" style="left:32px;top:439.5px;width:241px;height:1px;background:#a8a8a8;"></div>
<div class="r" style="left:32px;top:440.5px;width:241px;height:1px;background:#fafafa;"></div>
<div class="t" style="top:447.47px;font-size:9.6px;color:#141414;left:45.00px;transform-origin:0 0;transform:scaleX(0.9399);-webkit-text-stroke:0.22px #141414;">Выход</div>
<div class="t" style="top:447.47px;font-size:9.6px;color:#141414;right:740.00px;transform-origin:100% 0;transform:scaleX(0.9820);-webkit-text-stroke:0.22px #141414;">Ctrl+Q</div>
</body></html>
